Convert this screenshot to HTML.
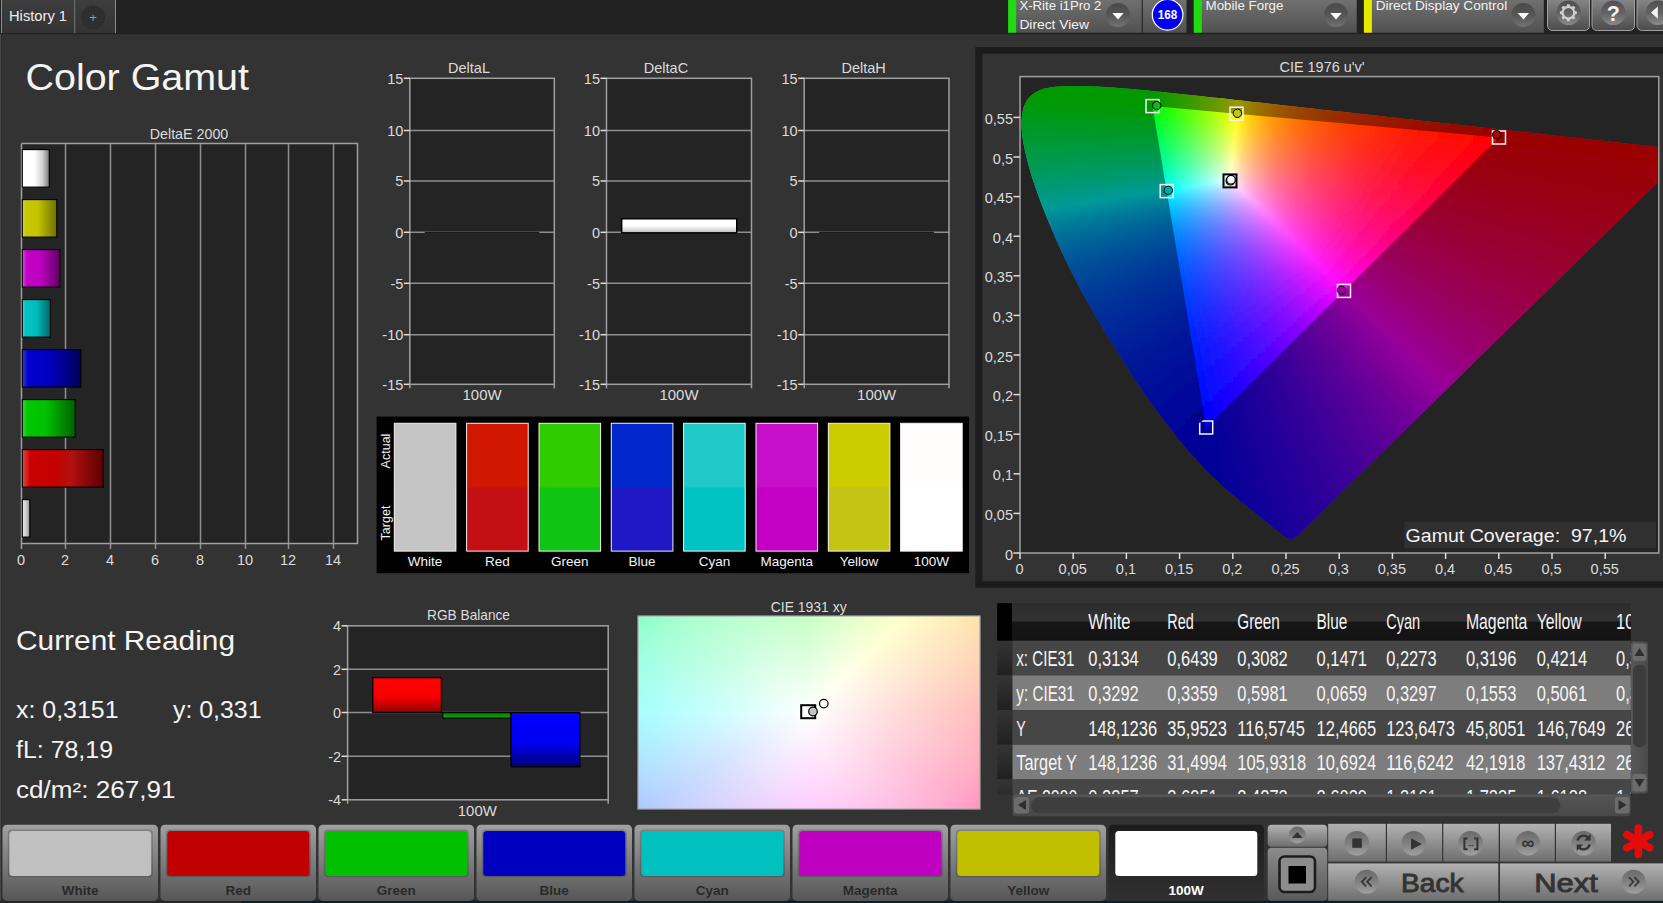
<!DOCTYPE html>
<html><head><meta charset="utf-8"><title>Color Gamut</title>
<style>html,body{margin:0;padding:0;background:#333;overflow:hidden}svg{display:block;font-family:'Liberation Sans', sans-serif}</style>
</head><body>
<svg width="1663" height="903" viewBox="0 0 1663 903">
<defs>
<linearGradient id="gtab" x1="0" y1="0" x2="0" y2="1"><stop offset="0" stop-color="#3d3d3d"/><stop offset="1" stop-color="#343434"/></linearGradient>
<linearGradient id="gpan" x1="0" y1="0" x2="0" y2="1"><stop offset="0" stop-color="#707070"/><stop offset="1" stop-color="#515151"/></linearGradient>
<linearGradient id="gbtn" x1="0" y1="0" x2="0" y2="1"><stop offset="0" stop-color="#868686"/><stop offset="1" stop-color="#4c4c4c"/></linearGradient>
<linearGradient id="gcirc" x1="0" y1="0" x2="0" y2="1"><stop offset="0" stop-color="#4a4a4a"/><stop offset="0.5" stop-color="#565656"/><stop offset="1" stop-color="#727272"/></linearGradient>
<linearGradient id="gcirc2" x1="0" y1="0" x2="0" y2="1"><stop offset="0" stop-color="#505050"/><stop offset="0.5" stop-color="#626262"/><stop offset="1" stop-color="#8a8a8a"/></linearGradient>
<linearGradient id="bw" x1="0" y1="0" x2="1" y2="0"><stop offset="0" stop-color="#fff"/><stop offset="0.45" stop-color="#fff"/><stop offset="0.75" stop-color="#d0d0d0"/><stop offset="1" stop-color="#777"/></linearGradient>
<linearGradient id="by" x1="0" y1="0" x2="1" y2="0"><stop offset="0" stop-color="#d4d432"/><stop offset="0.12" stop-color="#c8c800"/><stop offset="0.45" stop-color="#c4c400"/><stop offset="1" stop-color="#6e6e00"/></linearGradient>
<linearGradient id="bm" x1="0" y1="0" x2="1" y2="0"><stop offset="0" stop-color="#d850d8"/><stop offset="0.12" stop-color="#c400c8"/><stop offset="0.5" stop-color="#bc00c0"/><stop offset="1" stop-color="#5e0062"/></linearGradient>
<linearGradient id="bc" x1="0" y1="0" x2="1" y2="0"><stop offset="0" stop-color="#40d0d0"/><stop offset="0.12" stop-color="#00c4c4"/><stop offset="0.5" stop-color="#00bcbc"/><stop offset="1" stop-color="#006868"/></linearGradient>
<linearGradient id="bb" x1="0" y1="0" x2="1" y2="0"><stop offset="0" stop-color="#3838d8"/><stop offset="0.1" stop-color="#0000cc"/><stop offset="0.45" stop-color="#0000c4"/><stop offset="1" stop-color="#000058"/></linearGradient>
<linearGradient id="bg" x1="0" y1="0" x2="1" y2="0"><stop offset="0" stop-color="#38d838"/><stop offset="0.1" stop-color="#00c800"/><stop offset="0.45" stop-color="#00c000"/><stop offset="1" stop-color="#006000"/></linearGradient>
<linearGradient id="br" x1="0" y1="0" x2="1" y2="0"><stop offset="0" stop-color="#e04848"/><stop offset="0.1" stop-color="#cc0000"/><stop offset="0.4" stop-color="#c40000"/><stop offset="0.6" stop-color="#b41010"/><stop offset="1" stop-color="#5c0000"/></linearGradient>
<linearGradient id="bgr" x1="0" y1="0" x2="1" y2="0"><stop offset="0" stop-color="#e8e8e8"/><stop offset="0.5" stop-color="#ccc"/><stop offset="1" stop-color="#909090"/></linearGradient>
<linearGradient id="bwv" x1="0" y1="0" x2="0" y2="1"><stop offset="0" stop-color="#fff"/><stop offset="0.5" stop-color="#fff"/><stop offset="1" stop-color="#bdbdbd"/></linearGradient>
<linearGradient id="r0" gradientUnits="userSpaceOnUse" x1="1033" x2="1165" y1="0" y2="0"><stop offset="0" stop-color="#0f0"/><stop offset=".886" stop-color="#0f0"/><stop offset="1" stop-color="#2f0"/></linearGradient>
<linearGradient id="r1" gradientUnits="userSpaceOnUse" x1="1026" x2="1221" y1="0" y2="0"><stop offset="0" stop-color="#00ff02"/><stop offset=".641" stop-color="#0f0"/><stop offset=".826" stop-color="#59ff00"/><stop offset="1" stop-color="#c0ff00"/></linearGradient>
<linearGradient id="r2" gradientUnits="userSpaceOnUse" x1="1024" x2="1257" y1="0" y2="0"><stop offset="0" stop-color="#00ff0b"/><stop offset=".3" stop-color="#0f0"/><stop offset=".549" stop-color="#0f0"/><stop offset=".648" stop-color="#38ff00"/><stop offset=".747" stop-color="#78ff00"/><stop offset=".837" stop-color="#baff00"/><stop offset=".918" stop-color="#feff00"/><stop offset="1" stop-color="#ffc400"/></linearGradient>
<linearGradient id="r3" gradientUnits="userSpaceOnUse" x1="1022" x2="1284" y1="0" y2="0"><stop offset="0" stop-color="#0f1"/><stop offset=".5" stop-color="#01ff00"/><stop offset=".588" stop-color="#3aff00"/><stop offset=".672" stop-color="#7f0"/><stop offset=".748" stop-color="#b7ff00"/><stop offset=".824" stop-color="#ff0"/><stop offset=".863" stop-color="#ffdc00"/><stop offset=".905" stop-color="#ffbe00"/><stop offset="1" stop-color="#ff8c00"/></linearGradient>
<linearGradient id="r4" gradientUnits="userSpaceOnUse" x1="1021" x2="1311" y1="0" y2="0"><stop offset="0" stop-color="#00ff16"/><stop offset=".455" stop-color="#00ff03"/><stop offset=".531" stop-color="#36ff00"/><stop offset=".607" stop-color="#74ff00"/><stop offset=".676" stop-color="#b4ff00"/><stop offset=".748" stop-color="#fffe00"/><stop offset=".797" stop-color="#ffcf00"/><stop offset=".855" stop-color="#ffa600"/><stop offset=".921" stop-color="#ff8400"/><stop offset="1" stop-color="#f60"/></linearGradient>
<linearGradient id="r5" gradientUnits="userSpaceOnUse" x1="1020" x2="1338" y1="0" y2="0"><stop offset="0" stop-color="#00ff1b"/><stop offset=".421" stop-color="#01ff09"/><stop offset=".494" stop-color="#3bff05"/><stop offset=".56" stop-color="#7f0"/><stop offset=".623" stop-color="#b8ff00"/><stop offset=".682" stop-color="#feff00"/><stop offset=".742" stop-color="#ffc300"/><stop offset=".811" stop-color="#ff9300"/><stop offset=".896" stop-color="#ff6c00"/><stop offset="1" stop-color="#ff4c00"/></linearGradient>
<linearGradient id="r6" gradientUnits="userSpaceOnUse" x1="1020" x2="1356" y1="0" y2="0"><stop offset="0" stop-color="#00ff1f"/><stop offset=".399" stop-color="#00ff0f"/><stop offset=".464" stop-color="#37ff0b"/><stop offset=".53" stop-color="#77ff07"/><stop offset=".589" stop-color="#b8ff02"/><stop offset=".646" stop-color="#ff0"/><stop offset=".676" stop-color="#ffdc00"/><stop offset=".708" stop-color="#ffbd00"/><stop offset=".786" stop-color="#f80"/><stop offset=".881" stop-color="#ff5f00"/><stop offset="1" stop-color="#ff3d00"/></linearGradient>
<linearGradient id="r7" gradientUnits="userSpaceOnUse" x1="1020" x2="1374" y1="0" y2="0"><stop offset="0" stop-color="#00ff23"/><stop offset=".379" stop-color="#00ff14"/><stop offset=".438" stop-color="#34ff10"/><stop offset=".5" stop-color="#73ff0c"/><stop offset=".556" stop-color="#b5ff08"/><stop offset=".613" stop-color="#ffff03"/><stop offset=".644" stop-color="#ffd800"/><stop offset=".678" stop-color="#ffb700"/><stop offset=".718" stop-color="#f90"/><stop offset=".76" stop-color="#ff8000"/><stop offset=".864" stop-color="#ff5400"/><stop offset="1" stop-color="#ff3200"/></linearGradient>
<linearGradient id="r8" gradientUnits="userSpaceOnUse" x1="1020" x2="1391" y1="0" y2="0"><stop offset="0" stop-color="#00ff26"/><stop offset=".364" stop-color="#01ff18"/><stop offset=".423" stop-color="#39ff15"/><stop offset=".48" stop-color="#76ff11"/><stop offset=".534" stop-color="#b9ff0d"/><stop offset=".582" stop-color="#fcff09"/><stop offset=".62" stop-color="#ffd105"/><stop offset=".652" stop-color="#ffb102"/><stop offset=".693" stop-color="#ff9300"/><stop offset=".739" stop-color="#ff7800"/><stop offset=".852" stop-color="#ff4b00"/><stop offset="1" stop-color="#ff2800"/></linearGradient>
<linearGradient id="r9" gradientUnits="userSpaceOnUse" x1="1020" x2="1409" y1="0" y2="0"><stop offset="0" stop-color="#00ff2a"/><stop offset=".347" stop-color="#00ff1d"/><stop offset=".404" stop-color="#39ff1a"/><stop offset=".458" stop-color="#76ff17"/><stop offset=".509" stop-color="#b9ff13"/><stop offset=".555" stop-color="#fdff0f"/><stop offset=".591" stop-color="#ffd00a"/><stop offset=".627" stop-color="#ffac06"/><stop offset=".668" stop-color="#ff8d02"/><stop offset=".717" stop-color="#ff7000"/><stop offset=".774" stop-color="#ff5800"/><stop offset=".838" stop-color="#ff4300"/><stop offset="1" stop-color="#ff2000"/></linearGradient>
<linearGradient id="r10" gradientUnits="userSpaceOnUse" x1="1020" x2="1427" y1="0" y2="0"><stop offset="0" stop-color="#00ff2e"/><stop offset=".332" stop-color="#0f2"/><stop offset=".381" stop-color="#33ff1f"/><stop offset=".435" stop-color="#73ff1c"/><stop offset=".484" stop-color="#b6ff19"/><stop offset=".531" stop-color="#feff15"/><stop offset=".565" stop-color="#ffcf0f"/><stop offset=".602" stop-color="#ffa90a"/><stop offset=".646" stop-color="#ff8705"/><stop offset=".698" stop-color="#ff6902"/><stop offset=".757" stop-color="#ff5000"/><stop offset=".826" stop-color="#ff3b00"/><stop offset="1" stop-color="#ff1800"/></linearGradient>
<linearGradient id="r11" gradientUnits="userSpaceOnUse" x1="1020" x2="1445" y1="0" y2="0"><stop offset="0" stop-color="#00ff31"/><stop offset=".32" stop-color="#01ff27"/><stop offset=".372" stop-color="#3aff24"/><stop offset=".421" stop-color="#79ff22"/><stop offset=".466" stop-color="#b9ff1f"/><stop offset=".508" stop-color="#ffff1c"/><stop offset=".541" stop-color="#ffcf14"/><stop offset=".579" stop-color="#ffa60e"/><stop offset=".624" stop-color="#ff8309"/><stop offset=".678" stop-color="#ff6404"/><stop offset=".741" stop-color="#ff4a00"/><stop offset=".814" stop-color="#ff3400"/><stop offset="1" stop-color="#ff1200"/></linearGradient>
<linearGradient id="r12" gradientUnits="userSpaceOnUse" x1="1020" x2="1463" y1="0" y2="0"><stop offset="0" stop-color="#00ff35"/><stop offset=".307" stop-color="#00ff2c"/><stop offset=".354" stop-color="#37ff2a"/><stop offset=".402" stop-color="#76ff27"/><stop offset=".445" stop-color="#b6ff25"/><stop offset=".488" stop-color="#ff2"/><stop offset=".521" stop-color="#ffcb19"/><stop offset=".56" stop-color="#ffa112"/><stop offset=".607" stop-color="#ff7c0c"/><stop offset=".661" stop-color="#ff5e06"/><stop offset=".727" stop-color="#ff4302"/><stop offset=".804" stop-color="#ff2e00"/><stop offset="1" stop-color="#ff0c00"/></linearGradient>
<linearGradient id="r13" gradientUnits="userSpaceOnUse" x1="1020" x2="1481" y1="0" y2="0"><stop offset="0" stop-color="#00ff39"/><stop offset=".295" stop-color="#00ff31"/><stop offset=".338" stop-color="#34ff2f"/><stop offset=".384" stop-color="#72ff2d"/><stop offset=".425" stop-color="#b3ff2b"/><stop offset=".469" stop-color="#fffe28"/><stop offset=".501" stop-color="#ffca1e"/><stop offset=".54" stop-color="#ff9e16"/><stop offset=".588" stop-color="#ff780f"/><stop offset=".644" stop-color="#ff5909"/><stop offset=".711" stop-color="#ff3e04"/><stop offset=".792" stop-color="#ff2800"/><stop offset="1" stop-color="#ff0700"/></linearGradient>
<linearGradient id="r14" gradientUnits="userSpaceOnUse" x1="1020" x2="1499" y1="0" y2="0"><stop offset="0" stop-color="#00ff3c"/><stop offset=".286" stop-color="#01ff36"/><stop offset=".33" stop-color="#39ff34"/><stop offset=".372" stop-color="#75ff33"/><stop offset=".409" stop-color="#b3ff31"/><stop offset=".451" stop-color="#fffd2f"/><stop offset=".484" stop-color="#ffc623"/><stop offset=".524" stop-color="#ff991a"/><stop offset=".572" stop-color="#ff7312"/><stop offset=".628" stop-color="#ff540b"/><stop offset=".697" stop-color="#ff3a05"/><stop offset=".781" stop-color="#ff2401"/><stop offset=".881" stop-color="#f10"/><stop offset="1" stop-color="#ff0200"/></linearGradient>
<linearGradient id="r15" gradientUnits="userSpaceOnUse" x1="1020" x2="1517" y1="0" y2="0"><stop offset="0" stop-color="#00ff40"/><stop offset=".276" stop-color="#00ff3b"/><stop offset=".316" stop-color="#35ff3a"/><stop offset=".356" stop-color="#72ff39"/><stop offset=".39" stop-color="#acff37"/><stop offset=".435" stop-color="#fffc35"/><stop offset=".469" stop-color="#ffc328"/><stop offset=".509" stop-color="#ff941d"/><stop offset=".557" stop-color="#ff6e14"/><stop offset=".616" stop-color="#ff4f0d"/><stop offset=".69" stop-color="#ff3307"/><stop offset=".779" stop-color="#ff1d02"/><stop offset=".901" stop-color="#ff0900"/><stop offset="1" stop-color="#f00"/></linearGradient>
<linearGradient id="r16" gradientUnits="userSpaceOnUse" x1="1020" x2="1535" y1="0" y2="0"><stop offset="0" stop-color="#0f4"/><stop offset=".266" stop-color="#00ff40"/><stop offset=".301" stop-color="#2fff3f"/><stop offset=".342" stop-color="#6eff3f"/><stop offset=".375" stop-color="#a8ff3e"/><stop offset=".417" stop-color="#feff3c"/><stop offset=".419" stop-color="#fffb3c"/><stop offset=".437" stop-color="#ffda33"/><stop offset=".454" stop-color="#ffbf2c"/><stop offset=".495" stop-color="#ff9020"/><stop offset=".546" stop-color="#ff6817"/><stop offset=".606" stop-color="#ff490f"/><stop offset=".685" stop-color="#ff2d08"/><stop offset=".784" stop-color="#ff1602"/><stop offset=".94" stop-color="#f00"/><stop offset="1" stop-color="#f00"/></linearGradient>
<linearGradient id="r17" gradientUnits="userSpaceOnUse" x1="1020" x2="1553" y1="0" y2="0"><stop offset="0" stop-color="#00ff48"/><stop offset=".259" stop-color="#01ff45"/><stop offset=".298" stop-color="#3aff45"/><stop offset=".336" stop-color="#78ff44"/><stop offset=".37" stop-color="#b7ff44"/><stop offset=".403" stop-color="#ffff43"/><stop offset=".42" stop-color="#ffdd3a"/><stop offset=".437" stop-color="#ffc132"/><stop offset=".478" stop-color="#ff8f25"/><stop offset=".529" stop-color="#ff661a"/><stop offset=".593" stop-color="#ff4511"/><stop offset=".679" stop-color="#ff2809"/><stop offset=".79" stop-color="#ff1002"/><stop offset=".904" stop-color="#f00"/><stop offset="1" stop-color="#f00"/></linearGradient>
<linearGradient id="r18" gradientUnits="userSpaceOnUse" x1="1020" x2="1571" y1="0" y2="0"><stop offset="0" stop-color="#00ff4b"/><stop offset=".25" stop-color="#00ff4b"/><stop offset=".287" stop-color="#36ff4b"/><stop offset=".323" stop-color="#75ff4a"/><stop offset=".356" stop-color="#b4ff4a"/><stop offset=".39" stop-color="#fffe4a"/><stop offset=".407" stop-color="#ffdc40"/><stop offset=".425" stop-color="#ffbd37"/><stop offset=".466" stop-color="#ff8a28"/><stop offset=".519" stop-color="#ff611c"/><stop offset=".583" stop-color="#ff4012"/><stop offset=".677" stop-color="#ff2209"/><stop offset=".797" stop-color="#ff0a02"/><stop offset=".871" stop-color="#f00"/><stop offset="1" stop-color="#f00"/></linearGradient>
<linearGradient id="r19" gradientUnits="userSpaceOnUse" x1="1020" x2="1589" y1="0" y2="0"><stop offset="0" stop-color="#00ff4f"/><stop offset=".243" stop-color="#00ff50"/><stop offset=".274" stop-color="#30ff50"/><stop offset=".311" stop-color="#71ff51"/><stop offset=".343" stop-color="#b0ff51"/><stop offset=".378" stop-color="#fffd51"/><stop offset=".394" stop-color="#ffdb46"/><stop offset=".411" stop-color="#ffbc3c"/><stop offset=".453" stop-color="#ff882c"/><stop offset=".506" stop-color="#ff5e1e"/><stop offset=".571" stop-color="#ff3c14"/><stop offset=".671" stop-color="#ff1d0a"/><stop offset=".801" stop-color="#ff0503"/><stop offset=".842" stop-color="#ff0001"/><stop offset="1" stop-color="#f00"/></linearGradient>
<linearGradient id="r20" gradientUnits="userSpaceOnUse" x1="1020" x2="1607" y1="0" y2="0"><stop offset="0" stop-color="#00ff53"/><stop offset=".237" stop-color="#01ff56"/><stop offset=".271" stop-color="#38ff56"/><stop offset=".303" stop-color="#74ff57"/><stop offset=".33" stop-color="#adff57"/><stop offset=".366" stop-color="#fffc57"/><stop offset=".382" stop-color="#ffda4c"/><stop offset=".4" stop-color="#ffb941"/><stop offset=".421" stop-color="#ff9c37"/><stop offset=".443" stop-color="#ff832f"/><stop offset=".496" stop-color="#ff5a21"/><stop offset=".562" stop-color="#ff3815"/><stop offset=".668" stop-color="#ff190b"/><stop offset=".809" stop-color="#ff0003"/><stop offset="1" stop-color="#f00"/></linearGradient>
<linearGradient id="r21" gradientUnits="userSpaceOnUse" x1="1021" x2="1625" y1="0" y2="0"><stop offset="0" stop-color="#00ff57"/><stop offset=".228" stop-color="#00ff5b"/><stop offset=".26" stop-color="#35ff5c"/><stop offset=".291" stop-color="#71ff5d"/><stop offset=".323" stop-color="#b5ff5e"/><stop offset=".353" stop-color="#feff5f"/><stop offset=".354" stop-color="#fffb5e"/><stop offset=".369" stop-color="#ffd952"/><stop offset=".387" stop-color="#ffb846"/><stop offset=".407" stop-color="#ff9b3c"/><stop offset=".43" stop-color="#ff8132"/><stop offset=".485" stop-color="#ff5623"/><stop offset=".553" stop-color="#ff3417"/><stop offset=".652" stop-color="#ff170c"/><stop offset=".783" stop-color="#ff0004"/><stop offset="1" stop-color="#f00"/></linearGradient>
<linearGradient id="r22" gradientUnits="userSpaceOnUse" x1="1021" x2="1642" y1="0" y2="0"><stop offset="0" stop-color="#00ff5b"/><stop offset=".222" stop-color="#00ff61"/><stop offset=".251" stop-color="#31ff62"/><stop offset=".285" stop-color="#74ff64"/><stop offset=".316" stop-color="#b9ff65"/><stop offset=".343" stop-color="#ffff67"/><stop offset=".359" stop-color="#ffd858"/><stop offset=".377" stop-color="#ffb74b"/><stop offset=".396" stop-color="#ff9a40"/><stop offset=".419" stop-color="#ff8036"/><stop offset=".472" stop-color="#ff5526"/><stop offset=".541" stop-color="#ff3219"/><stop offset=".636" stop-color="#ff160e"/><stop offset=".758" stop-color="#ff0006"/><stop offset="1" stop-color="#f00"/></linearGradient>
<linearGradient id="r23" gradientUnits="userSpaceOnUse" x1="1021" x2="1658" y1="0" y2="0"><stop offset="0" stop-color="#00ff5f"/><stop offset=".218" stop-color="#01ff67"/><stop offset=".25" stop-color="#3aff68"/><stop offset=".279" stop-color="#77ff6a"/><stop offset=".306" stop-color="#b5ff6c"/><stop offset=".334" stop-color="#fffe6e"/><stop offset=".35" stop-color="#ffd75e"/><stop offset=".367" stop-color="#ffb651"/><stop offset=".388" stop-color="#ff9744"/><stop offset=".41" stop-color="#ff7d3a"/><stop offset=".465" stop-color="#ff5128"/><stop offset=".534" stop-color="#ff2f1a"/><stop offset=".623" stop-color="#ff1510"/><stop offset=".736" stop-color="#ff0007"/><stop offset="1" stop-color="#f00"/></linearGradient>
<linearGradient id="r24" gradientUnits="userSpaceOnUse" x1="1022" x2="1658" y1="0" y2="0"><stop offset="0" stop-color="#00ff63"/><stop offset=".217" stop-color="#00ff6c"/><stop offset=".247" stop-color="#36ff6e"/><stop offset=".277" stop-color="#73ff71"/><stop offset=".303" stop-color="#b1ff73"/><stop offset=".333" stop-color="#fffd75"/><stop offset=".349" stop-color="#ffd664"/><stop offset=".366" stop-color="#ffb556"/><stop offset=".387" stop-color="#ff9649"/><stop offset=".409" stop-color="#ff7d3e"/><stop offset=".464" stop-color="#ff502b"/><stop offset=".533" stop-color="#ff2f1d"/><stop offset=".621" stop-color="#ff1412"/><stop offset=".733" stop-color="#ff0009"/><stop offset="1" stop-color="#f00"/></linearGradient>
<linearGradient id="r25" gradientUnits="userSpaceOnUse" x1="1022" x2="1658" y1="0" y2="0"><stop offset="0" stop-color="#00ff67"/><stop offset=".217" stop-color="#00ff72"/><stop offset=".244" stop-color="#2fff74"/><stop offset=".275" stop-color="#70ff77"/><stop offset=".302" stop-color="#aeff7a"/><stop offset=".333" stop-color="#fffc7c"/><stop offset=".349" stop-color="#ffd56b"/><stop offset=".366" stop-color="#ffb45c"/><stop offset=".387" stop-color="#ff954e"/><stop offset=".409" stop-color="#ff7c42"/><stop offset=".464" stop-color="#ff502f"/><stop offset=".533" stop-color="#ff2e1f"/><stop offset=".619" stop-color="#ff1414"/><stop offset=".73" stop-color="#ff000b"/><stop offset="1" stop-color="#f00"/></linearGradient>
<linearGradient id="r26" gradientUnits="userSpaceOnUse" x1="1022" x2="1658" y1="0" y2="0"><stop offset="0" stop-color="#00ff6b"/><stop offset=".219" stop-color="#01ff78"/><stop offset=".248" stop-color="#38ff7b"/><stop offset=".277" stop-color="#73ff7e"/><stop offset=".305" stop-color="#b6ff81"/><stop offset=".332" stop-color="#feff85"/><stop offset=".333" stop-color="#fffc83"/><stop offset=".349" stop-color="#ffd471"/><stop offset=".366" stop-color="#ffb361"/><stop offset=".387" stop-color="#ff9453"/><stop offset=".409" stop-color="#ff7b47"/><stop offset=".464" stop-color="#ff4f32"/><stop offset=".533" stop-color="#ff2d22"/><stop offset=".618" stop-color="#ff1416"/><stop offset=".726" stop-color="#ff000d"/><stop offset="1" stop-color="#f00"/></linearGradient>
<linearGradient id="r27" gradientUnits="userSpaceOnUse" x1="1023" x2="1658" y1="0" y2="0"><stop offset="0" stop-color="#00ff70"/><stop offset=".217" stop-color="#00ff7e"/><stop offset=".247" stop-color="#37ff82"/><stop offset=".277" stop-color="#76ff85"/><stop offset=".306" stop-color="#baff89"/><stop offset=".331" stop-color="#ffff8d"/><stop offset=".346" stop-color="#ffd779"/><stop offset=".364" stop-color="#ffb568"/><stop offset=".384" stop-color="#ff9658"/><stop offset=".406" stop-color="#ff7c4c"/><stop offset=".461" stop-color="#ff4f35"/><stop offset=".531" stop-color="#ff2d25"/><stop offset=".616" stop-color="#ff1418"/><stop offset=".723" stop-color="#ff000e"/><stop offset="1" stop-color="#ff0001"/></linearGradient>
<linearGradient id="r28" gradientUnits="userSpaceOnUse" x1="1023" x2="1658" y1="0" y2="0"><stop offset="0" stop-color="#00ff74"/><stop offset=".217" stop-color="#00ff85"/><stop offset=".244" stop-color="#30ff88"/><stop offset=".276" stop-color="#72ff8c"/><stop offset=".302" stop-color="#b2ff90"/><stop offset=".331" stop-color="#fffe94"/><stop offset=".346" stop-color="#ffd67f"/><stop offset=".364" stop-color="#ffb46e"/><stop offset=".383" stop-color="#ff975f"/><stop offset=".405" stop-color="#ff7c51"/><stop offset=".458" stop-color="#ff503a"/><stop offset=".529" stop-color="#ff2d28"/><stop offset=".613" stop-color="#ff141a"/><stop offset=".72" stop-color="#ff0010"/><stop offset="1" stop-color="#ff0002"/></linearGradient>
<linearGradient id="r29" gradientUnits="userSpaceOnUse" x1="1024" x2="1658" y1="0" y2="0"><stop offset="0" stop-color="#00ff78"/><stop offset=".218" stop-color="#01ff8b"/><stop offset=".248" stop-color="#39ff8f"/><stop offset=".276" stop-color="#76ff93"/><stop offset=".301" stop-color="#b3ff97"/><stop offset=".33" stop-color="#fffd9c"/><stop offset=".345" stop-color="#ffd586"/><stop offset=".363" stop-color="#ffb373"/><stop offset=".382" stop-color="#ff9664"/><stop offset=".404" stop-color="#ff7b55"/><stop offset=".457" stop-color="#ff4f3d"/><stop offset=".528" stop-color="#ff2c2a"/><stop offset=".612" stop-color="#ff131c"/><stop offset=".716" stop-color="#ff0012"/><stop offset="1" stop-color="#ff0003"/></linearGradient>
<linearGradient id="r30" gradientUnits="userSpaceOnUse" x1="1024" x2="1658" y1="0" y2="0"><stop offset="0" stop-color="#00ff7c"/><stop offset=".218" stop-color="#00ff91"/><stop offset=".246" stop-color="#35ff95"/><stop offset=".274" stop-color="#72ff9a"/><stop offset=".3" stop-color="#afff9f"/><stop offset=".33" stop-color="#fffca4"/><stop offset=".345" stop-color="#ffd48d"/><stop offset=".363" stop-color="#ffb279"/><stop offset=".382" stop-color="#ff9569"/><stop offset=".404" stop-color="#ff7a59"/><stop offset=".457" stop-color="#ff4f40"/><stop offset=".528" stop-color="#ff2c2d"/><stop offset=".61" stop-color="#ff131f"/><stop offset=".713" stop-color="#ff0014"/><stop offset="1" stop-color="#ff0004"/></linearGradient>
<linearGradient id="r31" gradientUnits="userSpaceOnUse" x1="1025" x2="1658" y1="0" y2="0"><stop offset="0" stop-color="#00ff81"/><stop offset=".216" stop-color="#00ff98"/><stop offset=".242" stop-color="#2eff9c"/><stop offset=".272" stop-color="#6effa1"/><stop offset=".297" stop-color="#abffa6"/><stop offset=".327" stop-color="#feffad"/><stop offset=".329" stop-color="#fffcab"/><stop offset=".344" stop-color="#ffd393"/><stop offset=".362" stop-color="#ffb17f"/><stop offset=".381" stop-color="#ff946e"/><stop offset=".403" stop-color="#ff7a5e"/><stop offset=".457" stop-color="#ff4e44"/><stop offset=".528" stop-color="#ff2b2f"/><stop offset=".608" stop-color="#ff1321"/><stop offset=".709" stop-color="#ff0016"/><stop offset="1" stop-color="#ff0005"/></linearGradient>
<linearGradient id="r32" gradientUnits="userSpaceOnUse" x1="1025" x2="1658" y1="0" y2="0"><stop offset="0" stop-color="#00ff85"/><stop offset=".218" stop-color="#01ff9e"/><stop offset=".248" stop-color="#3bffa4"/><stop offset=".276" stop-color="#79ffa9"/><stop offset=".302" stop-color="#b8ffaf"/><stop offset=".327" stop-color="#ffffb6"/><stop offset=".343" stop-color="#ffd69c"/><stop offset=".36" stop-color="#ffb386"/><stop offset=".379" stop-color="#ff9574"/><stop offset=".401" stop-color="#ff7a63"/><stop offset=".455" stop-color="#ff4e48"/><stop offset=".526" stop-color="#ff2b32"/><stop offset=".605" stop-color="#ff1323"/><stop offset=".706" stop-color="#ff0017"/><stop offset="1" stop-color="#ff0006"/></linearGradient>
<linearGradient id="r33" gradientUnits="userSpaceOnUse" x1="1026" x2="1658" y1="0" y2="0"><stop offset="0" stop-color="#00ff8a"/><stop offset=".217" stop-color="#00ffa5"/><stop offset=".245" stop-color="#37ffaa"/><stop offset=".274" stop-color="#75ffb1"/><stop offset=".299" stop-color="#b4ffb7"/><stop offset=".326" stop-color="#fffebe"/><stop offset=".34" stop-color="#ffd8a5"/><stop offset=".358" stop-color="#ffb58e"/><stop offset=".378" stop-color="#ff9479"/><stop offset=".4" stop-color="#ff7968"/><stop offset=".454" stop-color="#ff4d4b"/><stop offset=".525" stop-color="#ff2a35"/><stop offset=".604" stop-color="#ff1325"/><stop offset=".703" stop-color="#ff0019"/><stop offset="1" stop-color="#ff0007"/></linearGradient>
<linearGradient id="r34" gradientUnits="userSpaceOnUse" x1="1027" x2="1658" y1="0" y2="0"><stop offset="0" stop-color="#00ff8e"/><stop offset=".216" stop-color="#00ffac"/><stop offset=".241" stop-color="#30ffb1"/><stop offset=".271" stop-color="#71ffb8"/><stop offset=".296" stop-color="#b0ffbf"/><stop offset=".325" stop-color="#fffdc6"/><stop offset=".339" stop-color="#ffd7ac"/><stop offset=".357" stop-color="#ffb494"/><stop offset=".377" stop-color="#ff937e"/><stop offset=".399" stop-color="#ff786c"/><stop offset=".453" stop-color="#ff4c4f"/><stop offset=".525" stop-color="#ff2a37"/><stop offset=".602" stop-color="#ff1228"/><stop offset=".699" stop-color="#ff001b"/><stop offset="1" stop-color="#ff0008"/></linearGradient>
<linearGradient id="r35" gradientUnits="userSpaceOnUse" x1="1027" x2="1658" y1="0" y2="0"><stop offset="0" stop-color="#00ff93"/><stop offset=".217" stop-color="#01ffb3"/><stop offset=".246" stop-color="#39ffb9"/><stop offset=".273" stop-color="#74ffc0"/><stop offset=".296" stop-color="#b0ffc7"/><stop offset=".325" stop-color="#fffdce"/><stop offset=".339" stop-color="#ffd6b4"/><stop offset=".357" stop-color="#ffb39a"/><stop offset=".377" stop-color="#ff9284"/><stop offset=".399" stop-color="#ff7771"/><stop offset=".453" stop-color="#ff4b52"/><stop offset=".525" stop-color="#ff293a"/><stop offset=".601" stop-color="#ff122a"/><stop offset=".696" stop-color="#ff001d"/><stop offset="1" stop-color="#ff0009"/></linearGradient>
<linearGradient id="r36" gradientUnits="userSpaceOnUse" x1="1028" x2="1658" y1="0" y2="0"><stop offset="0" stop-color="#00ff98"/><stop offset=".117" stop-color="#00ffa7"/><stop offset=".216" stop-color="#00ffb9"/><stop offset=".243" stop-color="#35ffc0"/><stop offset=".27" stop-color="#71ffc7"/><stop offset=".297" stop-color="#b5ffd0"/><stop offset=".322" stop-color="#feffd9"/><stop offset=".324" stop-color="#fffcd6"/><stop offset=".338" stop-color="#ffd5bb"/><stop offset=".356" stop-color="#ffb2a1"/><stop offset=".376" stop-color="#ff9189"/><stop offset=".398" stop-color="#ff7776"/><stop offset=".452" stop-color="#ff4b56"/><stop offset=".522" stop-color="#ff293d"/><stop offset=".598" stop-color="#ff122c"/><stop offset=".692" stop-color="#ff001f"/><stop offset="1" stop-color="#ff000a"/></linearGradient>
<linearGradient id="r37" gradientUnits="userSpaceOnUse" x1="1028" x2="1658" y1="0" y2="0"><stop offset="0" stop-color="#00ff9c"/><stop offset=".117" stop-color="#00ffad"/><stop offset=".216" stop-color="#00ffc0"/><stop offset=".24" stop-color="#2dffc7"/><stop offset=".268" stop-color="#6cffcf"/><stop offset=".297" stop-color="#b5ffd8"/><stop offset=".322" stop-color="#ffffe2"/><stop offset=".324" stop-color="#fffbdf"/><stop offset=".338" stop-color="#ffd4c2"/><stop offset=".356" stop-color="#ffb1a7"/><stop offset=".375" stop-color="#ff9290"/><stop offset=".397" stop-color="#ff777b"/><stop offset=".451" stop-color="#ff4b5a"/><stop offset=".522" stop-color="#ff2840"/><stop offset=".597" stop-color="#ff122f"/><stop offset=".689" stop-color="#ff0021"/><stop offset="1" stop-color="#ff000b"/></linearGradient>
<linearGradient id="r38" gradientUnits="userSpaceOnUse" x1="1029" x2="1658" y1="0" y2="0"><stop offset="0" stop-color="#00ffa1"/><stop offset=".118" stop-color="#00ffb3"/><stop offset=".216" stop-color="#01ffc8"/><stop offset=".245" stop-color="#3affd0"/><stop offset=".272" stop-color="#78ffd8"/><stop offset=".297" stop-color="#b9ffe2"/><stop offset=".321" stop-color="#ffffeb"/><stop offset=".335" stop-color="#ffd7cc"/><stop offset=".353" stop-color="#ffb2af"/><stop offset=".372" stop-color="#ff9497"/><stop offset=".394" stop-color="#ff7881"/><stop offset=".448" stop-color="#ff4b5e"/><stop offset=".52" stop-color="#ff2843"/><stop offset=".593" stop-color="#ff1232"/><stop offset=".685" stop-color="#ff0023"/><stop offset="1" stop-color="#ff000c"/></linearGradient>
<linearGradient id="r39" gradientUnits="userSpaceOnUse" x1="1030" x2="1658" y1="0" y2="0"><stop offset="0" stop-color="#00ffa6"/><stop offset=".118" stop-color="#00ffb9"/><stop offset=".215" stop-color="#00ffcf"/><stop offset=".242" stop-color="#36ffd7"/><stop offset=".269" stop-color="#74ffe0"/><stop offset=".293" stop-color="#b1ffe9"/><stop offset=".32" stop-color="#fffef4"/><stop offset=".334" stop-color="#ffd6d4"/><stop offset=".352" stop-color="#ffb1b6"/><stop offset=".371" stop-color="#ff939d"/><stop offset=".393" stop-color="#ff7786"/><stop offset=".447" stop-color="#ff4a62"/><stop offset=".519" stop-color="#ff2745"/><stop offset=".592" stop-color="#ff1134"/><stop offset=".682" stop-color="#ff0026"/><stop offset=".82" stop-color="#ff0018"/><stop offset="1" stop-color="#ff000d"/></linearGradient>
<linearGradient id="r40" gradientUnits="userSpaceOnUse" x1="1030" x2="1658" y1="0" y2="0"><stop offset="0" stop-color="#00ffab"/><stop offset=".118" stop-color="#00ffbf"/><stop offset=".215" stop-color="#00ffd6"/><stop offset=".239" stop-color="#2fffde"/><stop offset=".268" stop-color="#6fffe8"/><stop offset=".291" stop-color="#adfff1"/><stop offset=".32" stop-color="#fffdfc"/><stop offset=".334" stop-color="#ffd5db"/><stop offset=".352" stop-color="#ffb0bc"/><stop offset=".371" stop-color="#ff92a2"/><stop offset=".393" stop-color="#ff768b"/><stop offset=".447" stop-color="#ff4965"/><stop offset=".519" stop-color="#ff2748"/><stop offset=".591" stop-color="#ff1136"/><stop offset=".678" stop-color="#ff0028"/><stop offset=".818" stop-color="#ff0019"/><stop offset="1" stop-color="#ff000e"/></linearGradient>
<linearGradient id="r41" gradientUnits="userSpaceOnUse" x1="1031" x2="1658" y1="0" y2="0"><stop offset="0" stop-color="#00ffb0"/><stop offset=".118" stop-color="#00ffc5"/><stop offset=".215" stop-color="#01ffde"/><stop offset=".262" stop-color="#64ffee"/><stop offset=".3" stop-color="#c8ffff"/><stop offset=".322" stop-color="#fff2fd"/><stop offset=".337" stop-color="#ffcddc"/><stop offset=".354" stop-color="#ffaabe"/><stop offset=".375" stop-color="#ff8aa2"/><stop offset=".397" stop-color="#ff708b"/><stop offset=".451" stop-color="#ff4566"/><stop offset=".523" stop-color="#ff2449"/><stop offset=".592" stop-color="#ff1038"/><stop offset=".675" stop-color="#ff002a"/><stop offset=".815" stop-color="#ff001b"/><stop offset="1" stop-color="#ff000f"/></linearGradient>
<linearGradient id="r42" gradientUnits="userSpaceOnUse" x1="1031" x2="1658" y1="0" y2="0"><stop offset="0" stop-color="#00ffb5"/><stop offset=".118" stop-color="#00ffcb"/><stop offset=".215" stop-color="#00ffe6"/><stop offset=".249" stop-color="#46fff2"/><stop offset=".281" stop-color="#93ffff"/><stop offset=".325" stop-color="#ffe8fd"/><stop offset=".34" stop-color="#ffc4dd"/><stop offset=".357" stop-color="#ffa3bf"/><stop offset=".378" stop-color="#ff85a4"/><stop offset=".4" stop-color="#ff6c8d"/><stop offset=".456" stop-color="#ff4267"/><stop offset=".528" stop-color="#ff224b"/><stop offset=".593" stop-color="#ff0f3a"/><stop offset=".671" stop-color="#ff002c"/><stop offset=".813" stop-color="#ff001c"/><stop offset="1" stop-color="#ff0010"/></linearGradient>
<linearGradient id="r43" gradientUnits="userSpaceOnUse" x1="1032" x2="1657" y1="0" y2="0"><stop offset="0" stop-color="#00ffba"/><stop offset=".117" stop-color="#00ffd1"/><stop offset=".214" stop-color="#00ffed"/><stop offset=".234" stop-color="#25fff4"/><stop offset=".259" stop-color="#5fffff"/><stop offset=".328" stop-color="#ffdefd"/><stop offset=".344" stop-color="#ffb9db"/><stop offset=".362" stop-color="#ff9abe"/><stop offset=".382" stop-color="#ff7ea4"/><stop offset=".405" stop-color="#ff668e"/><stop offset=".461" stop-color="#ff3e68"/><stop offset=".533" stop-color="#ff1f4c"/><stop offset=".669" stop-color="#ff002e"/><stop offset=".811" stop-color="#ff001e"/><stop offset="1" stop-color="#f01"/></linearGradient>
<linearGradient id="r44" gradientUnits="userSpaceOnUse" x1="1033" x2="1655" y1="0" y2="0"><stop offset="0" stop-color="#00ffbf"/><stop offset=".119" stop-color="#00ffd8"/><stop offset=".215" stop-color="#01fff6"/><stop offset=".24" stop-color="#32ffff"/><stop offset=".331" stop-color="#ffd5fe"/><stop offset=".347" stop-color="#ffb2dc"/><stop offset=".365" stop-color="#ff94bf"/><stop offset=".386" stop-color="#ff79a5"/><stop offset=".408" stop-color="#ff628f"/><stop offset=".465" stop-color="#ff3c6a"/><stop offset=".539" stop-color="#ff1d4d"/><stop offset=".667" stop-color="#ff0031"/><stop offset=".81" stop-color="#ff0020"/><stop offset="1" stop-color="#ff0013"/></linearGradient>
<linearGradient id="r45" gradientUnits="userSpaceOnUse" x1="1034" x2="1653" y1="0" y2="0"><stop offset="0" stop-color="#00ffc4"/><stop offset=".118" stop-color="#00ffde"/><stop offset=".215" stop-color="#00fffd"/><stop offset=".271" stop-color="#74e9ff"/><stop offset=".334" stop-color="#ffccfe"/><stop offset=".351" stop-color="#ffabdd"/><stop offset=".368" stop-color="#ff8fc1"/><stop offset=".389" stop-color="#ff75a7"/><stop offset=".414" stop-color="#ff5d90"/><stop offset=".47" stop-color="#ff386b"/><stop offset=".544" stop-color="#ff1b4e"/><stop offset=".666" stop-color="#f03"/><stop offset=".809" stop-color="#ff0021"/><stop offset="1" stop-color="#ff0014"/></linearGradient>
<linearGradient id="r46" gradientUnits="userSpaceOnUse" x1="1034" x2="1651" y1="0" y2="0"><stop offset="0" stop-color="#00ffca"/><stop offset=".109" stop-color="#00ffe2"/><stop offset=".199" stop-color="#0ff"/><stop offset=".216" stop-color="#00f9ff"/><stop offset=".272" stop-color="#70e2ff"/><stop offset=".339" stop-color="#ffc4fe"/><stop offset=".355" stop-color="#ffa4de"/><stop offset=".373" stop-color="#ff89c2"/><stop offset=".394" stop-color="#ff70a8"/><stop offset=".418" stop-color="#ff5a91"/><stop offset=".475" stop-color="#ff366d"/><stop offset=".549" stop-color="#ff194f"/><stop offset=".665" stop-color="#ff0035"/><stop offset=".809" stop-color="#ff0023"/><stop offset="1" stop-color="#ff0015"/></linearGradient>
<linearGradient id="r47" gradientUnits="userSpaceOnUse" x1="1035" x2="1649" y1="0" y2="0"><stop offset="0" stop-color="#00ffcf"/><stop offset=".096" stop-color="#00ffe5"/><stop offset=".178" stop-color="#0ff"/><stop offset=".217" stop-color="#01f1ff"/><stop offset=".279" stop-color="#79d8ff"/><stop offset=".342" stop-color="#ffbcfe"/><stop offset=".358" stop-color="#ff9edf"/><stop offset=".378" stop-color="#ff82c1"/><stop offset=".423" stop-color="#ff5592"/><stop offset=".482" stop-color="#ff326d"/><stop offset=".555" stop-color="#ff1750"/><stop offset=".663" stop-color="#ff0038"/><stop offset=".808" stop-color="#ff0025"/><stop offset="1" stop-color="#ff0016"/></linearGradient>
<linearGradient id="r48" gradientUnits="userSpaceOnUse" x1="1036" x2="1647" y1="0" y2="0"><stop offset="0" stop-color="#00ffd5"/><stop offset=".157" stop-color="#0ff"/><stop offset=".216" stop-color="#00e9ff"/><stop offset=".28" stop-color="#78d0ff"/><stop offset=".345" stop-color="#ffb4ff"/><stop offset=".362" stop-color="#ff97e0"/><stop offset=".381" stop-color="#ff7dc2"/><stop offset=".427" stop-color="#ff5293"/><stop offset=".486" stop-color="#ff306e"/><stop offset=".561" stop-color="#ff1551"/><stop offset=".661" stop-color="#ff003a"/><stop offset=".807" stop-color="#ff0026"/><stop offset="1" stop-color="#ff0017"/></linearGradient>
<linearGradient id="r49" gradientUnits="userSpaceOnUse" x1="1036" x2="1645" y1="0" y2="0"><stop offset="0" stop-color="#00ffda"/><stop offset=".138" stop-color="#0ff"/><stop offset=".217" stop-color="#00e3ff"/><stop offset=".281" stop-color="#75caff"/><stop offset=".35" stop-color="#ffacff"/><stop offset=".365" stop-color="#ff94e3"/><stop offset=".383" stop-color="#ff7cc8"/><stop offset=".424" stop-color="#ff549c"/><stop offset=".475" stop-color="#ff3578"/><stop offset=".539" stop-color="#ff1c5c"/><stop offset=".66" stop-color="#ff003d"/><stop offset=".806" stop-color="#ff0028"/><stop offset="1" stop-color="#ff0019"/></linearGradient>
<linearGradient id="r50" gradientUnits="userSpaceOnUse" x1="1037" x2="1643" y1="0" y2="0"><stop offset="0" stop-color="#00ffe0"/><stop offset=".116" stop-color="#0ff"/><stop offset=".218" stop-color="#01dcff"/><stop offset=".287" stop-color="#7dc1ff"/><stop offset=".353" stop-color="#ffa5ff"/><stop offset=".386" stop-color="#ff77c9"/><stop offset=".427" stop-color="#ff519d"/><stop offset=".479" stop-color="#ff337a"/><stop offset=".543" stop-color="#ff1a5d"/><stop offset=".658" stop-color="#ff003f"/><stop offset=".805" stop-color="#ff002a"/><stop offset="1" stop-color="#ff001a"/></linearGradient>
<linearGradient id="r51" gradientUnits="userSpaceOnUse" x1="1038" x2="1641" y1="0" y2="0"><stop offset="0" stop-color="#00ffe5"/><stop offset=".095" stop-color="#0ff"/><stop offset=".217" stop-color="#00d5ff"/><stop offset=".279" stop-color="#6bbeff"/><stop offset=".358" stop-color="#ff9cfc"/><stop offset=".391" stop-color="#ff70c8"/><stop offset=".433" stop-color="#ff4c9d"/><stop offset=".484" stop-color="#ff2f7b"/><stop offset=".549" stop-color="#ff185e"/><stop offset=".657" stop-color="#ff0042"/><stop offset=".804" stop-color="#ff002c"/><stop offset="1" stop-color="#ff001b"/></linearGradient>
<linearGradient id="r52" gradientUnits="userSpaceOnUse" x1="1039" x2="1639" y1="0" y2="0"><stop offset="0" stop-color="#00ffeb"/><stop offset=".073" stop-color="#0ff"/><stop offset=".217" stop-color="#00cfff"/><stop offset=".278" stop-color="#67b8ff"/><stop offset=".362" stop-color="#ff95fc"/><stop offset=".397" stop-color="#ff6ac7"/><stop offset=".438" stop-color="#ff489d"/><stop offset=".49" stop-color="#ff2c7b"/><stop offset=".553" stop-color="#ff1660"/><stop offset=".655" stop-color="#f04"/><stop offset=".803" stop-color="#ff002d"/><stop offset="1" stop-color="#ff001c"/></linearGradient>
<linearGradient id="r53" gradientUnits="userSpaceOnUse" x1="1039" x2="1637" y1="0" y2="0"><stop offset="0" stop-color="#00fff1"/><stop offset=".052" stop-color="#0ff"/><stop offset=".219" stop-color="#01c9ff"/><stop offset=".286" stop-color="#70b0ff"/><stop offset=".366" stop-color="#ff8ffd"/><stop offset=".401" stop-color="#ff66c8"/><stop offset=".443" stop-color="#ff459e"/><stop offset=".495" stop-color="#ff2a7d"/><stop offset=".559" stop-color="#ff1561"/><stop offset=".654" stop-color="#ff0047"/><stop offset=".801" stop-color="#ff002f"/><stop offset="1" stop-color="#ff001e"/></linearGradient>
<linearGradient id="r54" gradientUnits="userSpaceOnUse" x1="1040" x2="1635" y1="0" y2="0"><stop offset="0" stop-color="#00fff7"/><stop offset=".03" stop-color="#0ff"/><stop offset=".218" stop-color="#00c3ff"/><stop offset=".287" stop-color="#70abff"/><stop offset=".37" stop-color="#ff89fd"/><stop offset=".405" stop-color="#ff61c9"/><stop offset=".447" stop-color="#ff42a0"/><stop offset=".499" stop-color="#ff287e"/><stop offset=".563" stop-color="#ff1363"/><stop offset=".652" stop-color="#ff004a"/><stop offset=".8" stop-color="#ff0031"/><stop offset="1" stop-color="#ff001f"/></linearGradient>
<linearGradient id="r55" gradientUnits="userSpaceOnUse" x1="1041" x2="1633" y1="0" y2="0"><stop offset="0" stop-color="#00fffd"/><stop offset=".218" stop-color="#00beff"/><stop offset=".287" stop-color="#6ca6ff"/><stop offset=".373" stop-color="#ff84fd"/><stop offset=".409" stop-color="#ff5dca"/><stop offset=".451" stop-color="#ff3fa1"/><stop offset=".503" stop-color="#ff267f"/><stop offset=".566" stop-color="#ff1264"/><stop offset=".65" stop-color="#ff004c"/><stop offset=".799" stop-color="#f03"/><stop offset="1" stop-color="#ff0020"/></linearGradient>
<linearGradient id="r56" gradientUnits="userSpaceOnUse" x1="1042" x2="1631" y1="0" y2="0"><stop offset="0" stop-color="#00fbff"/><stop offset=".219" stop-color="#00b9ff"/><stop offset=".294" stop-color="#749eff"/><stop offset=".377" stop-color="#ff7efe"/><stop offset=".413" stop-color="#ff59cb"/><stop offset=".455" stop-color="#ff3ca2"/><stop offset=".508" stop-color="#ff2481"/><stop offset=".57" stop-color="#ff1066"/><stop offset=".649" stop-color="#ff004f"/><stop offset=".744" stop-color="#ff003d"/><stop offset="1" stop-color="#f02"/></linearGradient>
<linearGradient id="r57" gradientUnits="userSpaceOnUse" x1="1042" x2="1629" y1="0" y2="0"><stop offset="0" stop-color="#00f5ff"/><stop offset=".22" stop-color="#00b4ff"/><stop offset=".296" stop-color="#7499ff"/><stop offset=".382" stop-color="#ff79fe"/><stop offset=".417" stop-color="#f5c"/><stop offset=".46" stop-color="#ff39a4"/><stop offset=".513" stop-color="#ff2282"/><stop offset=".576" stop-color="#ff0f67"/><stop offset=".647" stop-color="#ff0052"/><stop offset=".746" stop-color="#ff003f"/><stop offset="1" stop-color="#ff0023"/></linearGradient>
<linearGradient id="r58" gradientUnits="userSpaceOnUse" x1="1043" x2="1627" y1="0" y2="0"><stop offset="0" stop-color="#00efff"/><stop offset=".219" stop-color="#00afff"/><stop offset=".296" stop-color="#7195ff"/><stop offset=".385" stop-color="#ff74fe"/><stop offset=".421" stop-color="#ff52cd"/><stop offset=".464" stop-color="#ff37a5"/><stop offset=".515" stop-color="#ff2084"/><stop offset=".579" stop-color="#ff0e69"/><stop offset=".646" stop-color="#f05"/><stop offset=".748" stop-color="#ff0040"/><stop offset="1" stop-color="#ff0024"/></linearGradient>
<linearGradient id="r59" gradientUnits="userSpaceOnUse" x1="1044" x2="1625" y1="0" y2="0"><stop offset="0" stop-color="#00eaff"/><stop offset=".22" stop-color="#0af"/><stop offset=".303" stop-color="#788eff"/><stop offset=".389" stop-color="#ff6ffe"/><stop offset=".425" stop-color="#ff4ecd"/><stop offset=".468" stop-color="#ff34a6"/><stop offset=".52" stop-color="#ff1e86"/><stop offset=".583" stop-color="#ff0c6a"/><stop offset=".644" stop-color="#ff0058"/><stop offset=".752" stop-color="#ff0042"/><stop offset="1" stop-color="#ff0026"/></linearGradient>
<linearGradient id="r60" gradientUnits="userSpaceOnUse" x1="1045" x2="1623" y1="0" y2="0"><stop offset="0" stop-color="#00e4ff"/><stop offset=".22" stop-color="#00a5ff"/><stop offset=".304" stop-color="#788aff"/><stop offset=".393" stop-color="#ff6afe"/><stop offset=".429" stop-color="#ff4bce"/><stop offset=".472" stop-color="#ff31a7"/><stop offset=".524" stop-color="#ff1c87"/><stop offset=".587" stop-color="#ff0b6c"/><stop offset=".642" stop-color="#ff005b"/><stop offset=".754" stop-color="#ff0043"/><stop offset="1" stop-color="#ff0027"/></linearGradient>
<linearGradient id="r61" gradientUnits="userSpaceOnUse" x1="1046" x2="1621" y1="0" y2="0"><stop offset="0" stop-color="#00dfff"/><stop offset=".219" stop-color="#00a1ff"/><stop offset=".304" stop-color="#7586ff"/><stop offset=".397" stop-color="#ff65ff"/><stop offset=".433" stop-color="#ff47cf"/><stop offset=".477" stop-color="#ff2fa8"/><stop offset=".529" stop-color="#ff1a88"/><stop offset=".591" stop-color="#ff096d"/><stop offset=".64" stop-color="#ff005e"/><stop offset=".758" stop-color="#ff0045"/><stop offset="1" stop-color="#ff0028"/></linearGradient>
<linearGradient id="r62" gradientUnits="userSpaceOnUse" x1="1047" x2="1619" y1="0" y2="0"><stop offset="0" stop-color="#00daff"/><stop offset=".22" stop-color="#009dff"/><stop offset=".311" stop-color="#7c80ff"/><stop offset=".4" stop-color="#ff61ff"/><stop offset=".435" stop-color="#ff45d2"/><stop offset=".479" stop-color="#ff2dab"/><stop offset=".531" stop-color="#ff198a"/><stop offset=".594" stop-color="#ff086f"/><stop offset=".638" stop-color="#ff0061"/><stop offset=".76" stop-color="#ff0046"/><stop offset="1" stop-color="#ff002a"/></linearGradient>
<linearGradient id="r63" gradientUnits="userSpaceOnUse" x1="1047" x2="1617" y1="0" y2="0"><stop offset="0" stop-color="#00d4ff"/><stop offset=".221" stop-color="#0098ff"/><stop offset=".309" stop-color="#737cff"/><stop offset=".407" stop-color="#ff5afe"/><stop offset=".444" stop-color="#ff3fd0"/><stop offset=".488" stop-color="#ff29aa"/><stop offset=".54" stop-color="#ff168a"/><stop offset=".602" stop-color="#ff0670"/><stop offset=".635" stop-color="#f06"/><stop offset=".765" stop-color="#ff0048"/><stop offset="1" stop-color="#ff002c"/></linearGradient>
<linearGradient id="r64" gradientUnits="userSpaceOnUse" x1="1049" x2="1613" y1="0" y2="0"><stop offset="0" stop-color="#00cdff"/><stop offset=".222" stop-color="#0192ff"/><stop offset=".316" stop-color="#7975ff"/><stop offset=".413" stop-color="#ff54fe"/><stop offset=".45" stop-color="#ff3bd1"/><stop offset=".493" stop-color="#ff26ad"/><stop offset=".546" stop-color="#ff148d"/><stop offset=".608" stop-color="#ff0573"/><stop offset=".633" stop-color="#ff006b"/><stop offset=".77" stop-color="#ff004b"/><stop offset="1" stop-color="#ff002e"/></linearGradient>
<linearGradient id="r65" gradientUnits="userSpaceOnUse" x1="1050" x2="1610" y1="0" y2="0"><stop offset="0" stop-color="#00c6ff"/><stop offset=".221" stop-color="#008cff"/><stop offset=".318" stop-color="#776fff"/><stop offset=".42" stop-color="#ff4efe"/><stop offset=".457" stop-color="#ff36d2"/><stop offset=".5" stop-color="#ff22ae"/><stop offset=".552" stop-color="#ff1190"/><stop offset=".614" stop-color="#ff0375"/><stop offset=".688" stop-color="#ff005f"/><stop offset=".775" stop-color="#ff004d"/><stop offset="1" stop-color="#ff0030"/></linearGradient>
<linearGradient id="r66" gradientUnits="userSpaceOnUse" x1="1051" x2="1607" y1="0" y2="0"><stop offset="0" stop-color="#00c0ff"/><stop offset=".223" stop-color="#0187ff"/><stop offset=".326" stop-color="#7c69ff"/><stop offset=".426" stop-color="#ff49ff"/><stop offset=".464" stop-color="#ff32d3"/><stop offset=".507" stop-color="#ff1fb0"/><stop offset=".559" stop-color="#ff0f91"/><stop offset=".621" stop-color="#ff0177"/><stop offset=".692" stop-color="#ff0062"/><stop offset=".779" stop-color="#ff004f"/><stop offset="1" stop-color="#ff0032"/></linearGradient>
<linearGradient id="r67" gradientUnits="userSpaceOnUse" x1="1053" x2="1604" y1="0" y2="0"><stop offset="0" stop-color="#00b9ff"/><stop offset=".221" stop-color="#0082ff"/><stop offset=".327" stop-color="#7a64ff"/><stop offset=".432" stop-color="#ff43ff"/><stop offset=".47" stop-color="#ff2ed4"/><stop offset=".514" stop-color="#ff1cb1"/><stop offset=".564" stop-color="#ff0d94"/><stop offset=".626" stop-color="#ff007a"/><stop offset=".697" stop-color="#ff0064"/><stop offset=".782" stop-color="#ff0052"/><stop offset="1" stop-color="#ff0035"/></linearGradient>
<linearGradient id="r68" gradientUnits="userSpaceOnUse" x1="1054" x2="1601" y1="0" y2="0"><stop offset="0" stop-color="#00b4ff"/><stop offset=".223" stop-color="#017dff"/><stop offset=".333" stop-color="#7d5eff"/><stop offset=".439" stop-color="#ff3eff"/><stop offset=".477" stop-color="#ff2ad5"/><stop offset=".521" stop-color="#ff19b3"/><stop offset=".572" stop-color="#ff0a95"/><stop offset=".633" stop-color="#ff007c"/><stop offset=".704" stop-color="#f06"/><stop offset=".788" stop-color="#ff0054"/><stop offset="1" stop-color="#ff0037"/></linearGradient>
<linearGradient id="r69" gradientUnits="userSpaceOnUse" x1="1055" x2="1598" y1="0" y2="0"><stop offset="0" stop-color="#00aeff"/><stop offset=".223" stop-color="#0078ff"/><stop offset=".333" stop-color="#795aff"/><stop offset=".446" stop-color="#ff39ff"/><stop offset=".484" stop-color="#ff26d6"/><stop offset=".529" stop-color="#ff16b4"/><stop offset=".58" stop-color="#ff0897"/><stop offset=".639" stop-color="#ff007e"/><stop offset=".709" stop-color="#ff0069"/><stop offset=".792" stop-color="#ff0056"/><stop offset="1" stop-color="#ff0039"/></linearGradient>
<linearGradient id="r70" gradientUnits="userSpaceOnUse" x1="1057" x2="1595" y1="0" y2="0"><stop offset="0" stop-color="#00a8ff"/><stop offset=".223" stop-color="#0173ff"/><stop offset=".333" stop-color="#7556ff"/><stop offset=".454" stop-color="#ff33fd"/><stop offset=".491" stop-color="#ff22d7"/><stop offset=".535" stop-color="#ff13b5"/><stop offset=".613" stop-color="#ff008d"/><stop offset=".647" stop-color="#ff0080"/><stop offset=".797" stop-color="#ff0059"/><stop offset="1" stop-color="#ff003c"/></linearGradient>
<linearGradient id="r71" gradientUnits="userSpaceOnUse" x1="1058" x2="1592" y1="0" y2="0"><stop offset="0" stop-color="#00a3ff"/><stop offset=".223" stop-color="#006fff"/><stop offset=".335" stop-color="#7452ff"/><stop offset=".461" stop-color="#ff2ffe"/><stop offset=".498" stop-color="#ff1ed8"/><stop offset=".543" stop-color="#ff10b7"/><stop offset=".61" stop-color="#ff0093"/><stop offset=".654" stop-color="#ff0082"/><stop offset=".801" stop-color="#ff005b"/><stop offset="1" stop-color="#ff003e"/></linearGradient>
<linearGradient id="r72" gradientUnits="userSpaceOnUse" x1="1059" x2="1589" y1="0" y2="0"><stop offset="0" stop-color="#009eff"/><stop offset=".225" stop-color="#006bff"/><stop offset=".343" stop-color="#784dff"/><stop offset=".468" stop-color="#ff2bfe"/><stop offset=".506" stop-color="#ff1bd9"/><stop offset=".549" stop-color="#ff0eb9"/><stop offset=".609" stop-color="#f09"/><stop offset=".658" stop-color="#ff0085"/><stop offset=".804" stop-color="#ff005e"/><stop offset="1" stop-color="#ff0041"/></linearGradient>
<linearGradient id="r73" gradientUnits="userSpaceOnUse" x1="1061" x2="1586" y1="0" y2="0"><stop offset="0" stop-color="#09f"/><stop offset=".223" stop-color="#0067ff"/><stop offset=".343" stop-color="#754aff"/><stop offset=".474" stop-color="#ff26fe"/><stop offset=".512" stop-color="#ff18da"/><stop offset=".556" stop-color="#ff0bba"/><stop offset=".606" stop-color="#ff009f"/><stop offset=".665" stop-color="#ff0087"/><stop offset=".81" stop-color="#ff0060"/><stop offset="1" stop-color="#ff0043"/></linearGradient>
<linearGradient id="r74" gradientUnits="userSpaceOnUse" x1="1062" x2="1583" y1="0" y2="0"><stop offset="0" stop-color="#0094ff"/><stop offset=".225" stop-color="#0063ff"/><stop offset=".353" stop-color="#7b44ff"/><stop offset=".482" stop-color="#ff22fe"/><stop offset=".52" stop-color="#ff14db"/><stop offset=".564" stop-color="#ff08bb"/><stop offset=".603" stop-color="#ff00a6"/><stop offset=".672" stop-color="#ff0089"/><stop offset=".814" stop-color="#ff0063"/><stop offset="1" stop-color="#ff0046"/></linearGradient>
<linearGradient id="r75" gradientUnits="userSpaceOnUse" x1="1064" x2="1580" y1="0" y2="0"><stop offset="0" stop-color="#008fff"/><stop offset=".223" stop-color="#0060ff"/><stop offset=".353" stop-color="#7741ff"/><stop offset=".488" stop-color="#ff1eff"/><stop offset=".527" stop-color="#ff11db"/><stop offset=".57" stop-color="#ff06be"/><stop offset=".599" stop-color="#ff00ad"/><stop offset=".676" stop-color="#ff008c"/><stop offset=".816" stop-color="#f06"/><stop offset="1" stop-color="#ff0048"/></linearGradient>
<linearGradient id="r76" gradientUnits="userSpaceOnUse" x1="1065" x2="1577" y1="0" y2="0"><stop offset="0" stop-color="#008bff"/><stop offset=".225" stop-color="#005cff"/><stop offset=".361" stop-color="#7b3dff"/><stop offset=".496" stop-color="#ff1bff"/><stop offset=".535" stop-color="#ff0edc"/><stop offset=".578" stop-color="#ff03bf"/><stop offset=".627" stop-color="#ff00a5"/><stop offset=".684" stop-color="#ff008e"/><stop offset=".82" stop-color="#ff0068"/><stop offset="1" stop-color="#ff004b"/></linearGradient>
<linearGradient id="r77" gradientUnits="userSpaceOnUse" x1="1066" x2="1574" y1="0" y2="0"><stop offset="0" stop-color="#0086ff"/><stop offset=".224" stop-color="#0059ff"/><stop offset=".358" stop-color="#743aff"/><stop offset=".506" stop-color="#ff16fe"/><stop offset=".543" stop-color="#ff0bde"/><stop offset=".587" stop-color="#ff01c0"/><stop offset=".636" stop-color="#ff00a7"/><stop offset=".691" stop-color="#ff0090"/><stop offset=".827" stop-color="#ff006b"/><stop offset="1" stop-color="#ff004e"/></linearGradient>
<linearGradient id="r78" gradientUnits="userSpaceOnUse" x1="1068" x2="1569" y1="0" y2="0"><stop offset="0" stop-color="#0081ff"/><stop offset=".226" stop-color="#0054ff"/><stop offset=".371" stop-color="#7a34ff"/><stop offset=".517" stop-color="#ff12fe"/><stop offset=".555" stop-color="#ff07df"/><stop offset=".597" stop-color="#ff00c3"/><stop offset=".701" stop-color="#ff0093"/><stop offset=".832" stop-color="#ff006f"/><stop offset="1" stop-color="#ff0052"/></linearGradient>
<linearGradient id="r79" gradientUnits="userSpaceOnUse" x1="1070" x2="1565" y1="0" y2="0"><stop offset="0" stop-color="#007bff"/><stop offset=".226" stop-color="#0150ff"/><stop offset=".378" stop-color="#7b30ff"/><stop offset=".527" stop-color="#ff0dff"/><stop offset=".582" stop-color="#ff00d4"/><stop offset=".608" stop-color="#ff00c4"/><stop offset=".709" stop-color="#ff0097"/><stop offset=".838" stop-color="#ff0072"/><stop offset="1" stop-color="#ff0056"/></linearGradient>
<linearGradient id="r80" gradientUnits="userSpaceOnUse" x1="1072" x2="1561" y1="0" y2="0"><stop offset="0" stop-color="#0076ff"/><stop offset=".225" stop-color="#004cff"/><stop offset=".38" stop-color="#792cff"/><stop offset=".538" stop-color="#ff09ff"/><stop offset=".577" stop-color="#ff00e0"/><stop offset=".618" stop-color="#ff00c7"/><stop offset=".718" stop-color="#ff009a"/><stop offset=".843" stop-color="#ff0076"/><stop offset="1" stop-color="#ff005a"/></linearGradient>
<linearGradient id="r81" gradientUnits="userSpaceOnUse" x1="1075" x2="1557" y1="0" y2="0"><stop offset="0" stop-color="#0071ff"/><stop offset=".224" stop-color="#0048ff"/><stop offset=".39" stop-color="#7d27ff"/><stop offset=".548" stop-color="#ff05ff"/><stop offset=".571" stop-color="#ff00ed"/><stop offset=".629" stop-color="#ff00c8"/><stop offset=".726" stop-color="#ff009d"/><stop offset=".849" stop-color="#ff007a"/><stop offset="1" stop-color="#ff005e"/></linearGradient>
<linearGradient id="r82" gradientUnits="userSpaceOnUse" x1="1077" x2="1553" y1="0" y2="0"><stop offset="0" stop-color="#006cff"/><stop offset=".225" stop-color="#0045ff"/><stop offset=".395" stop-color="#7d24ff"/><stop offset=".559" stop-color="#ff01ff"/><stop offset=".639" stop-color="#ff00ca"/><stop offset=".735" stop-color="#ff00a0"/><stop offset=".853" stop-color="#ff007e"/><stop offset="1" stop-color="#ff0062"/></linearGradient>
<linearGradient id="r83" gradientUnits="userSpaceOnUse" x1="1079" x2="1549" y1="0" y2="0"><stop offset="0" stop-color="#0068ff"/><stop offset=".223" stop-color="#0041ff"/><stop offset=".389" stop-color="#7422ff"/><stop offset=".572" stop-color="#ff00fe"/><stop offset=".649" stop-color="#f0c"/><stop offset=".745" stop-color="#ff00a3"/><stop offset=".86" stop-color="#ff0081"/><stop offset="1" stop-color="#f06"/></linearGradient>
<linearGradient id="r84" gradientUnits="userSpaceOnUse" x1="1081" x2="1545" y1="0" y2="0"><stop offset="0" stop-color="#0063ff"/><stop offset=".224" stop-color="#003eff"/><stop offset=".39" stop-color="#7120ff"/><stop offset=".552" stop-color="#e700ff"/><stop offset=".584" stop-color="#ff00fe"/><stop offset=".659" stop-color="#ff00ce"/><stop offset=".752" stop-color="#ff00a6"/><stop offset=".864" stop-color="#ff0085"/><stop offset="1" stop-color="#ff006a"/></linearGradient>
<linearGradient id="r85" gradientUnits="userSpaceOnUse" x1="1083" x2="1541" y1="0" y2="0"><stop offset="0" stop-color="#005fff"/><stop offset=".225" stop-color="#003bff"/><stop offset=".389" stop-color="#6c1eff"/><stop offset=".546" stop-color="#da00ff"/><stop offset=".596" stop-color="#f0f"/><stop offset=".672" stop-color="#ff00cf"/><stop offset=".762" stop-color="#ff00a9"/><stop offset=".871" stop-color="#ff0089"/><stop offset="1" stop-color="#ff006e"/></linearGradient>
<linearGradient id="r86" gradientUnits="userSpaceOnUse" x1="1086" x2="1537" y1="0" y2="0"><stop offset="0" stop-color="#005bff"/><stop offset=".224" stop-color="#0138ff"/><stop offset=".384" stop-color="#661dff"/><stop offset=".539" stop-color="#ce00ff"/><stop offset=".608" stop-color="#f0f"/><stop offset=".681" stop-color="#ff00d3"/><stop offset=".769" stop-color="#ff00ad"/><stop offset=".874" stop-color="#ff008e"/><stop offset="1" stop-color="#ff0073"/></linearGradient>
<linearGradient id="r87" gradientUnits="userSpaceOnUse" x1="1088" x2="1533" y1="0" y2="0"><stop offset="0" stop-color="#0057ff"/><stop offset=".222" stop-color="#0035ff"/><stop offset=".378" stop-color="#5e1bff"/><stop offset=".533" stop-color="#c200ff"/><stop offset=".622" stop-color="#ff00fe"/><stop offset=".694" stop-color="#ff00d4"/><stop offset=".78" stop-color="#ff00b0"/><stop offset=".881" stop-color="#ff0092"/><stop offset="1" stop-color="#ff0078"/></linearGradient>
<linearGradient id="r88" gradientUnits="userSpaceOnUse" x1="1091" x2="1527" y1="0" y2="0"><stop offset="0" stop-color="#0052ff"/><stop offset=".222" stop-color="#0031ff"/><stop offset=".525" stop-color="#b500ff"/><stop offset=".64" stop-color="#f0f"/><stop offset=".709" stop-color="#ff00d7"/><stop offset=".791" stop-color="#ff00b5"/><stop offset=".888" stop-color="#ff0097"/><stop offset="1" stop-color="#ff007e"/></linearGradient>
<linearGradient id="r89" gradientUnits="userSpaceOnUse" x1="1094" x2="1522" y1="0" y2="0"><stop offset="0" stop-color="#004dff"/><stop offset=".222" stop-color="#002eff"/><stop offset=".516" stop-color="#a800ff"/><stop offset=".657" stop-color="#f0f"/><stop offset=".724" stop-color="#ff00d9"/><stop offset=".804" stop-color="#ff00b9"/><stop offset=".895" stop-color="#ff009d"/><stop offset="1" stop-color="#ff0085"/></linearGradient>
<linearGradient id="r90" gradientUnits="userSpaceOnUse" x1="1097" x2="1517" y1="0" y2="0"><stop offset="0" stop-color="#0049ff"/><stop offset=".221" stop-color="#012bff"/><stop offset=".507" stop-color="#9c00ff"/><stop offset=".674" stop-color="#f0f"/><stop offset=".74" stop-color="#ff00dc"/><stop offset=".814" stop-color="#ff00bd"/><stop offset=".9" stop-color="#ff00a3"/><stop offset="1" stop-color="#ff008b"/></linearGradient>
<linearGradient id="r91" gradientUnits="userSpaceOnUse" x1="1100" x2="1512" y1="0" y2="0"><stop offset="0" stop-color="#0045ff"/><stop offset=".221" stop-color="#0128ff"/><stop offset=".498" stop-color="#9100ff"/><stop offset=".692" stop-color="#f0f"/><stop offset=".757" stop-color="#ff00de"/><stop offset=".828" stop-color="#ff00c1"/><stop offset="1" stop-color="#ff0092"/></linearGradient>
<linearGradient id="r92" gradientUnits="userSpaceOnUse" x1="1103" x2="1507" y1="0" y2="0"><stop offset="0" stop-color="#0041ff"/><stop offset=".22" stop-color="#0125ff"/><stop offset=".488" stop-color="#8600ff"/><stop offset=".71" stop-color="#fe00ff"/><stop offset=".775" stop-color="#ff00df"/><stop offset=".839" stop-color="#ff00c6"/><stop offset="1" stop-color="#f09"/></linearGradient>
<linearGradient id="r93" gradientUnits="userSpaceOnUse" x1="1106" x2="1502" y1="0" y2="0"><stop offset="0" stop-color="#003dff"/><stop offset=".217" stop-color="#02f"/><stop offset=".477" stop-color="#7c00ff"/><stop offset=".73" stop-color="#fe00ff"/><stop offset=".854" stop-color="#ff00ca"/><stop offset="1" stop-color="#ff00a0"/></linearGradient>
<linearGradient id="r94" gradientUnits="userSpaceOnUse" x1="1109" x2="1497" y1="0" y2="0"><stop offset="0" stop-color="#0039ff"/><stop offset=".216" stop-color="#0020ff"/><stop offset=".466" stop-color="#7200ff"/><stop offset=".75" stop-color="#fe00ff"/><stop offset=".866" stop-color="#ff00ce"/><stop offset="1" stop-color="#ff00a7"/></linearGradient>
<linearGradient id="r95" gradientUnits="userSpaceOnUse" x1="1112" x2="1492" y1="0" y2="0"><stop offset="0" stop-color="#0035ff"/><stop offset=".216" stop-color="#001dff"/><stop offset=".453" stop-color="#6700ff"/><stop offset=".774" stop-color="#fe00ff"/><stop offset=".879" stop-color="#ff00d4"/><stop offset="1" stop-color="#ff00af"/></linearGradient>
<linearGradient id="r96" gradientUnits="userSpaceOnUse" x1="1115" x2="1486" y1="0" y2="0"><stop offset="0" stop-color="#0031ff"/><stop offset=".216" stop-color="#001aff"/><stop offset=".439" stop-color="#5c00ff"/><stop offset=".801" stop-color="#fe00ff"/><stop offset=".898" stop-color="#ff00d8"/><stop offset="1" stop-color="#ff00b9"/></linearGradient>
<linearGradient id="r97" gradientUnits="userSpaceOnUse" x1="1119" x2="1479" y1="0" y2="0"><stop offset="0" stop-color="#002dff"/><stop offset=".214" stop-color="#0017ff"/><stop offset=".425" stop-color="#5200ff"/><stop offset=".833" stop-color="#f0f"/><stop offset=".911" stop-color="#ff00e0"/><stop offset="1" stop-color="#ff00c4"/></linearGradient>
<linearGradient id="r98" gradientUnits="userSpaceOnUse" x1="1123" x2="1473" y1="0" y2="0"><stop offset="0" stop-color="#0029ff"/><stop offset=".211" stop-color="#0014ff"/><stop offset=".409" stop-color="#4900ff"/><stop offset=".863" stop-color="#f0f"/><stop offset="1" stop-color="#ff00cf"/></linearGradient>
<linearGradient id="r99" gradientUnits="userSpaceOnUse" x1="1127" x2="1467" y1="0" y2="0"><stop offset="0" stop-color="#0026ff"/><stop offset=".209" stop-color="#0012ff"/><stop offset=".391" stop-color="#4000ff"/><stop offset=".894" stop-color="#f0f"/><stop offset="1" stop-color="#ff00da"/></linearGradient>
<linearGradient id="r100" gradientUnits="userSpaceOnUse" x1="1131" x2="1461" y1="0" y2="0"><stop offset="0" stop-color="#02f"/><stop offset=".206" stop-color="#0010ff"/><stop offset=".373" stop-color="#3700ff"/><stop offset=".655" stop-color="#90f"/><stop offset=".927" stop-color="#fe00ff"/><stop offset="1" stop-color="#ff00e6"/></linearGradient>
<linearGradient id="r101" gradientUnits="userSpaceOnUse" x1="1135" x2="1455" y1="0" y2="0"><stop offset="0" stop-color="#001fff"/><stop offset=".203" stop-color="#000dff"/><stop offset=".353" stop-color="#2f00ff"/><stop offset=".662" stop-color="#9500ff"/><stop offset=".963" stop-color="#fe00ff"/><stop offset="1" stop-color="#ff00f3"/></linearGradient>
<linearGradient id="r102" gradientUnits="userSpaceOnUse" x1="1139" x2="1449" y1="0" y2="0"><stop offset="0" stop-color="#001bff"/><stop offset=".2" stop-color="#000bff"/><stop offset=".332" stop-color="#2700ff"/><stop offset=".671" stop-color="#9000ff"/><stop offset="1" stop-color="#fe00ff"/></linearGradient>
<linearGradient id="r103" gradientUnits="userSpaceOnUse" x1="1143" x2="1443" y1="0" y2="0"><stop offset="0" stop-color="#0018ff"/><stop offset=".197" stop-color="#0009ff"/><stop offset=".31" stop-color="#2000ff"/><stop offset=".66" stop-color="#8600ff"/><stop offset="1" stop-color="#f100ff"/></linearGradient>
<linearGradient id="r104" gradientUnits="userSpaceOnUse" x1="1147" x2="1436" y1="0" y2="0"><stop offset="0" stop-color="#0015ff"/><stop offset=".194" stop-color="#0007ff"/><stop offset=".287" stop-color="#1900ff"/><stop offset=".651" stop-color="#7c00ff"/><stop offset="1" stop-color="#e300ff"/></linearGradient>
<linearGradient id="r105" gradientUnits="userSpaceOnUse" x1="1152" x2="1430" y1="0" y2="0"><stop offset="0" stop-color="#0012ff"/><stop offset=".187" stop-color="#0005ff"/><stop offset=".259" stop-color="#1200ff"/><stop offset=".637" stop-color="#7300ff"/><stop offset="1" stop-color="#d700ff"/></linearGradient>
<linearGradient id="r106" gradientUnits="userSpaceOnUse" x1="1156" x2="1424" y1="0" y2="0"><stop offset="0" stop-color="#000fff"/><stop offset=".183" stop-color="#0003ff"/><stop offset=".597" stop-color="#6400ff"/><stop offset="1" stop-color="#c0f"/></linearGradient>
<linearGradient id="r107" gradientUnits="userSpaceOnUse" x1="1161" x2="1418" y1="0" y2="0"><stop offset="0" stop-color="#000cff"/><stop offset=".175" stop-color="#0001ff"/><stop offset=".595" stop-color="#5f00ff"/><stop offset="1" stop-color="#c100ff"/></linearGradient>
<linearGradient id="r108" gradientUnits="userSpaceOnUse" x1="1165" x2="1412" y1="0" y2="0"><stop offset="0" stop-color="#000aff"/><stop offset=".17" stop-color="#00f"/><stop offset="1" stop-color="#b600ff"/></linearGradient>
<linearGradient id="r109" gradientUnits="userSpaceOnUse" x1="1170" x2="1406" y1="0" y2="0"><stop offset="0" stop-color="#0007ff"/><stop offset=".161" stop-color="#00f"/><stop offset="1" stop-color="#ac00ff"/></linearGradient>
<linearGradient id="r110" gradientUnits="userSpaceOnUse" x1="1175" x2="1400" y1="0" y2="0"><stop offset="0" stop-color="#0004ff"/><stop offset=".151" stop-color="#00f"/><stop offset="1" stop-color="#a300ff"/></linearGradient>
<linearGradient id="r111" gradientUnits="userSpaceOnUse" x1="1180" x2="1393" y1="0" y2="0"><stop offset="0" stop-color="#0002ff"/><stop offset=".141" stop-color="#00f"/><stop offset="1" stop-color="#90f"/></linearGradient>
<linearGradient id="r112" gradientUnits="userSpaceOnUse" x1="1185" x2="1387" y1="0" y2="0"><stop offset="0" stop-color="#00f"/><stop offset=".129" stop-color="#00f"/><stop offset="1" stop-color="#9000ff"/></linearGradient>
<linearGradient id="r113" gradientUnits="userSpaceOnUse" x1="1190" x2="1381" y1="0" y2="0"><stop offset="0" stop-color="#00f"/><stop offset=".115" stop-color="#00f"/><stop offset="1" stop-color="#8700ff"/></linearGradient>
<linearGradient id="r114" gradientUnits="userSpaceOnUse" x1="1195" x2="1375" y1="0" y2="0"><stop offset="0" stop-color="#00f"/><stop offset=".1" stop-color="#00f"/><stop offset="1" stop-color="#7f00ff"/></linearGradient>
<linearGradient id="r115" gradientUnits="userSpaceOnUse" x1="1201" x2="1369" y1="0" y2="0"><stop offset="0" stop-color="#00f"/><stop offset=".077" stop-color="#00f"/><stop offset="1" stop-color="#70f"/></linearGradient>
<linearGradient id="r116" gradientUnits="userSpaceOnUse" x1="1207" x2="1363" y1="0" y2="0"><stop offset="0" stop-color="#00f"/><stop offset=".051" stop-color="#00f"/><stop offset="1" stop-color="#7000ff"/></linearGradient>
<linearGradient id="r117" gradientUnits="userSpaceOnUse" x1="1213" x2="1357" y1="0" y2="0"><stop offset="0" stop-color="#00f"/><stop offset="1" stop-color="#6900ff"/></linearGradient>
<linearGradient id="r118" gradientUnits="userSpaceOnUse" x1="1219" x2="1350" y1="0" y2="0"><stop offset="0" stop-color="#0100ff"/><stop offset="1" stop-color="#6100ff"/></linearGradient>
<linearGradient id="r119" gradientUnits="userSpaceOnUse" x1="1226" x2="1344" y1="0" y2="0"><stop offset="0" stop-color="#0600ff"/><stop offset="1" stop-color="#5a00ff"/></linearGradient>
<linearGradient id="r120" gradientUnits="userSpaceOnUse" x1="1233" x2="1338" y1="0" y2="0"><stop offset="0" stop-color="#0a00ff"/><stop offset="1" stop-color="#5400ff"/></linearGradient>
<linearGradient id="r121" gradientUnits="userSpaceOnUse" x1="1241" x2="1332" y1="0" y2="0"><stop offset="0" stop-color="#0e00ff"/><stop offset="1" stop-color="#4e00ff"/></linearGradient>
<linearGradient id="r122" gradientUnits="userSpaceOnUse" x1="1248" x2="1326" y1="0" y2="0"><stop offset="0" stop-color="#1200ff"/><stop offset="1" stop-color="#4700ff"/></linearGradient>
<linearGradient id="r123" gradientUnits="userSpaceOnUse" x1="1256" x2="1320" y1="0" y2="0"><stop offset="0" stop-color="#1600ff"/><stop offset="1" stop-color="#4200ff"/></linearGradient>
<linearGradient id="r124" gradientUnits="userSpaceOnUse" x1="1263" x2="1314" y1="0" y2="0"><stop offset="0" stop-color="#1a00ff"/><stop offset="1" stop-color="#3c00ff"/></linearGradient>
<linearGradient id="r125" gradientUnits="userSpaceOnUse" x1="1270" x2="1307" y1="0" y2="0"><stop offset="0" stop-color="#1e00ff"/><stop offset="1" stop-color="#3600ff"/></linearGradient>
<linearGradient id="r126" gradientUnits="userSpaceOnUse" x1="1278" x2="1301" y1="0" y2="0"><stop offset="0" stop-color="#20f"/><stop offset="1" stop-color="#3000ff"/></linearGradient>
<linearGradient id="r127" gradientUnits="userSpaceOnUse" x1="1286" x2="1295" y1="0" y2="0"><stop offset="0" stop-color="#2600ff"/><stop offset="1" stop-color="#2b00ff"/></linearGradient>
<clipPath id="loc"><path d="M1286.8 537.8L1286.2 537.5L1285.6 537.0L1284.9 536.6L1284.3 536.1L1283.5 535.5L1282.7 534.9L1281.8 534.2L1280.9 533.5L1279.9 532.8L1278.8 531.9L1277.7 531.0L1276.5 530.1L1275.3 529.1L1274.0 528.0L1272.7 526.9L1271.3 525.7L1269.8 524.5L1268.2 523.2L1266.6 521.9L1264.9 520.5L1263.1 519.1L1261.1 517.5L1259.1 515.9L1257.0 514.2L1254.7 512.4L1252.4 510.5L1249.9 508.5L1247.4 506.5L1244.8 504.4L1242.1 502.2L1239.2 499.9L1236.3 497.5L1233.2 494.9L1230.0 492.2L1226.7 489.3L1223.2 486.2L1219.7 483.0L1216.0 479.6L1212.2 476.0L1208.3 472.2L1204.2 468.0L1199.8 463.3L1195.1 458.1L1190.1 452.4L1184.7 446.2L1179.1 439.4L1173.3 432.3L1167.4 424.6L1161.3 416.6L1155.0 408.1L1148.6 399.2L1142.0 389.8L1135.3 379.9L1128.6 369.7L1121.8 359.0L1114.9 348.1L1108.1 337.1L1101.3 325.8L1094.6 314.4L1088.0 303.0L1081.6 291.5L1075.5 280.0L1069.7 268.6L1064.3 257.3L1059.2 246.4L1054.4 235.6L1050.0 225.2L1045.8 215.1L1042.0 205.4L1038.5 196.1L1035.4 187.3L1032.6 179.0L1030.2 171.2L1028.1 163.8L1026.4 157.0L1024.9 150.6L1023.7 144.6L1022.7 139.1L1022.1 133.9L1021.6 129.2L1021.5 124.8L1021.5 120.7L1021.8 116.9L1022.3 113.4L1022.9 110.1L1023.8 107.1L1024.9 104.3L1026.2 101.7L1027.7 99.4L1029.3 97.3L1031.1 95.5L1033.1 93.9L1035.1 92.4L1037.4 91.2L1039.7 90.2L1042.1 89.3L1044.6 88.5L1047.2 87.9L1049.9 87.5L1052.6 87.1L1055.4 86.8L1058.3 86.6L1061.2 86.4L1064.2 86.3L1067.2 86.2L1070.2 86.1L1073.3 86.1L1076.3 86.1L1079.3 86.1L1082.3 86.1L1085.4 86.2L1088.4 86.3L1091.5 86.4L1094.7 86.5L1097.8 86.6L1101.0 86.8L1104.3 87.0L1107.6 87.2L1111.0 87.4L1114.4 87.6L1117.8 87.9L1121.4 88.2L1124.9 88.5L1128.6 88.8L1132.3 89.1L1136.1 89.4L1139.9 89.8L1143.8 90.2L1147.8 90.6L1151.9 91.0L1156.1 91.4L1160.3 91.8L1164.7 92.2L1169.1 92.7L1173.6 93.2L1178.2 93.7L1182.9 94.2L1187.7 94.7L1192.6 95.2L1197.6 95.7L1202.7 96.3L1207.9 96.9L1213.2 97.4L1218.6 98.0L1224.2 98.6L1229.8 99.3L1235.5 99.9L1241.4 100.5L1247.4 101.2L1253.4 101.9L1259.6 102.6L1265.9 103.3L1272.4 104.0L1278.9 104.7L1285.5 105.5L1292.3 106.2L1299.1 107.0L1306.1 107.8L1313.1 108.6L1320.3 109.4L1327.5 110.2L1334.9 111.0L1342.3 111.8L1349.8 112.6L1357.4 113.5L1365.0 114.3L1372.7 115.2L1380.5 116.1L1388.3 116.9L1396.1 117.8L1403.9 118.7L1411.6 119.5L1419.3 120.4L1426.9 121.2L1434.4 122.1L1441.9 122.9L1449.3 123.8L1456.8 124.6L1464.2 125.4L1471.6 126.2L1478.9 127.0L1486.0 127.8L1493.0 128.6L1499.7 129.4L1506.3 130.1L1512.8 130.8L1519.2 131.5L1525.3 132.2L1531.4 132.9L1537.2 133.5L1543.0 134.2L1548.5 134.8L1553.8 135.4L1559.0 136.0L1564.0 136.5L1568.8 137.1L1573.5 137.6L1578.0 138.1L1582.3 138.6L1586.5 139.0L1590.6 139.5L1594.5 139.9L1598.2 140.3L1601.9 140.7L1605.4 141.1L1608.8 141.5L1612.1 141.9L1615.3 142.2L1618.5 142.6L1621.6 142.9L1624.5 143.3L1627.4 143.6L1630.2 143.9L1632.9 144.2L1635.4 144.5L1637.9 144.8L1640.3 145.0L1642.6 145.3L1644.9 145.5L1647.0 145.8L1649.0 146.0L1650.9 146.2L1652.7 146.4L1654.4 146.6L1656.0 146.8L1657.5 147.0L1658.9 147.1L1660.3 147.3L1661.6 147.4L1662.9 147.6L1664.0 147.7L1665.2 147.8L1666.2 147.9L1667.2 148.0L1668.2 148.2L1669.1 148.3L1669.9 148.3L1670.6 148.4L1671.3 148.5L1671.9 148.6L1672.5 148.6L1673.0 148.7L1673.6 148.8L1674.1 148.8L1674.6 148.9L1675.1 148.9L1675.6 149.0L1676.0 149.0L1676.4 149.1L1676.8 149.1L1677.2 149.2L1677.6 149.2L1678.0 149.3L1678.4 149.3L1678.8 149.3L1679.2 149.4L1679.6 149.4L1680.0 149.5L1680.4 149.5L1680.7 149.6L1681.1 149.6L1681.4 149.6L1681.7 149.7L1681.9 149.7L1682.1 149.7L1682.3 149.7L1682.4 149.7L1682.5 149.8L1682.7 149.8L1682.8 149.8L1682.9 149.8L1683.0 149.8L1683.1 149.8L1683.1 149.8L1683.2 149.8L1683.3 149.8L1683.3 149.8L1683.3 157.3L1296.1 536.9 Q1292.1 540.7 1286.8 537.8Z"/></clipPath>
<filter id="vb" filterUnits="userSpaceOnUse" x="1020" y="78" width="639" height="475"><feGaussianBlur stdDeviation="0 1.5"/></filter>
<clipPath id="plt"><rect x="1020" y="76.6" width="638.8" height="476.4"/></clipPath>
<linearGradient id="rbr" x1="0" y1="0" x2="0" y2="1"><stop offset="0" stop-color="#ff0000"/><stop offset="0.55" stop-color="#f80000"/><stop offset="1" stop-color="#900000"/></linearGradient>
<linearGradient id="rbg" x1="0" y1="0" x2="0" y2="1"><stop offset="0" stop-color="#006000"/><stop offset="0.4" stop-color="#009000"/><stop offset="1" stop-color="#00b000"/></linearGradient>
<linearGradient id="rbb" x1="0" y1="0" x2="0" y2="1"><stop offset="0" stop-color="#0000ff"/><stop offset="0.55" stop-color="#0000f4"/><stop offset="1" stop-color="#000078"/></linearGradient>
<linearGradient id="thd" x1="0" y1="0" x2="0" y2="1"><stop offset="0" stop-color="#2c2c2c"/><stop offset="0.47" stop-color="#323232"/><stop offset="0.51" stop-color="#161616"/><stop offset="1" stop-color="#131313"/></linearGradient>
<linearGradient id="trh" x1="0" y1="0" x2="0" y2="1"><stop offset="0" stop-color="#343434"/><stop offset="1" stop-color="#202020"/></linearGradient>
<clipPath id="tbl"><rect x="997" y="603" width="634" height="191.3"/></clipPath>
<linearGradient id="sbv" x1="0" y1="0" x2="1" y2="0"><stop offset="0" stop-color="#585858"/><stop offset="1" stop-color="#4a4a4a"/></linearGradient>
<linearGradient id="sbh" x1="0" y1="0" x2="0" y2="1"><stop offset="0" stop-color="#565656"/><stop offset="1" stop-color="#484848"/></linearGradient>
<linearGradient id="gtb" x1="0" y1="0" x2="0" y2="1"><stop offset="0" stop-color="#a2a2a2"/><stop offset="0.08" stop-color="#9a9a9a"/><stop offset="0.5" stop-color="#7c7c7c"/><stop offset="1" stop-color="#565656"/></linearGradient>
<linearGradient id="gsel" x1="0" y1="0" x2="0" y2="1"><stop offset="0" stop-color="#1c1c1c"/><stop offset="0.5" stop-color="#262626"/><stop offset="1" stop-color="#303030"/></linearGradient>
<linearGradient id="gtb2" x1="0" y1="0" x2="0" y2="1"><stop offset="0" stop-color="#b2b2b2"/><stop offset="1" stop-color="#6e6e6e"/></linearGradient>
<linearGradient id="gtb3" x1="0" y1="0" x2="0" y2="1"><stop offset="0" stop-color="#8c8c8c"/><stop offset="0.5" stop-color="#727272"/><stop offset="1" stop-color="#5a5a5a"/></linearGradient>
<linearGradient id="gic" x1="0" y1="0" x2="0" y2="1"><stop offset="0" stop-color="#6a6a6a"/><stop offset="0.5" stop-color="#808080"/><stop offset="1" stop-color="#a0a0a0"/></linearGradient>
</defs>
<rect x="0" y="0" width="1663" height="903" fill="#333"/>
<rect x="0" y="0" width="1663" height="34.2" fill="#222"/>
<rect x="0" y="34.2" width="1.3" height="870" fill="#474747"/>
<rect x="1.3" y="34.2" width="0.8" height="870" fill="#2b2b2b"/>
<rect x="2" y="0" width="72.5" height="33" fill="url(#gtab)"/>
<rect x="75" y="0" width="40.5" height="33" fill="url(#gtab)"/>
<line x1="1.5" y1="0" x2="1.5" y2="33" stroke="#8a8a8a" stroke-width="1"/>
<line x1="74.7" y1="0" x2="74.7" y2="33" stroke="#777" stroke-width="1"/>
<line x1="115.5" y1="0" x2="115.5" y2="33" stroke="#8a8a8a" stroke-width="1"/>
<text x="9" y="21.4" font-size="15" fill="#eee" textLength="58" lengthAdjust="spacingAndGlyphs">History 1</text>
<circle cx="93" cy="17.5" r="12" fill="#2e2e2e"/>
<text x="93" y="22" font-size="13" fill="#999" text-anchor="middle">+</text>
<rect x="1008.2" y="0" width="133.5" height="32.7" fill="url(#gpan)"/>
<rect x="1008.2" y="0" width="8" height="32.7" fill="#1fdc0f"/>
<text x="1019.4" y="9.8" font-size="13.5" fill="#f2f2f2" textLength="82" lengthAdjust="spacingAndGlyphs">X-Rite i1Pro 2</text>
<text x="1019.4" y="28.6" font-size="13.5" fill="#f2f2f2" textLength="69.5" lengthAdjust="spacingAndGlyphs">Direct View</text>
<circle cx="1118" cy="15" r="12" fill="url(#gcirc)"/>
<path d="M1112.3 13 h11.4 l-5.7 6.4z" fill="#fff"/>
<rect x="1142.8" y="0" width="43.700000000000045" height="32.7" fill="url(#gpan)"/>
<circle cx="1167.6" cy="14.8" r="15.3" fill="#0000f0" stroke="#fff" stroke-width="1.2"/>
<text x="1167.6" y="19.2" font-size="12" fill="#fff" text-anchor="middle" font-weight="bold" textLength="19.5" lengthAdjust="spacingAndGlyphs">168</text>
<rect x="1193.8" y="0" width="162.9000000000001" height="32.7" fill="url(#gpan)"/>
<rect x="1193.8" y="0" width="8" height="32.7" fill="#1fdc0f"/>
<text x="1205.5" y="9.8" font-size="13.5" fill="#f2f2f2" textLength="78" lengthAdjust="spacingAndGlyphs">Mobile Forge</text>
<circle cx="1336" cy="15" r="12" fill="url(#gcirc)"/>
<path d="M1330.3 13 h11.4 l-5.7 6.4z" fill="#fff"/>
<rect x="1363.9" y="0" width="179.89999999999986" height="32.7" fill="url(#gpan)"/>
<rect x="1363.9" y="0" width="8" height="32.7" fill="#e8e800"/>
<text x="1375.7" y="9.8" font-size="13.5" fill="#f2f2f2" textLength="131.5" lengthAdjust="spacingAndGlyphs">Direct Display Control</text>
<circle cx="1523.4" cy="15" r="12" fill="url(#gcirc)"/>
<path d="M1517.7 13 h11.4 l-5.7 6.4z" fill="#fff"/>
<path d="M1547.5 -1 V25 q0 5.5 5.5 5.5 H1584.0 q5.5 0 5.5 -5.5 V-1z" fill="url(#gbtn)" stroke="#a0a0a0" stroke-width="1"/>
<circle cx="1568.5" cy="12.8" r="12.3" fill="url(#gcirc2)"/>
<path d="M1592 -1 V25 q0 5.5 5.5 5.5 H1629.0 q5.5 0 5.5 -5.5 V-1z" fill="url(#gbtn)" stroke="#a0a0a0" stroke-width="1"/>
<circle cx="1613.3" cy="12.8" r="12.3" fill="url(#gcirc2)"/>
<text x="1613.2" y="20.6" font-size="21.5" fill="#f4f4f4" text-anchor="middle" font-weight="bold">?</text>
<path d="M1637 -1 V25 q0 5.5 5.5 5.5 H1664.5 q5.5 0 5.5 -5.5 V-1z" fill="url(#gbtn)" stroke="#a0a0a0" stroke-width="1"/>
<circle cx="1658" cy="12.8" r="12.3" fill="url(#gcirc2)"/>
<path d="M1657.8 6.4 v12.4 l-6.8 -6.2z" fill="#f4f4f4"/>
<path d="M1575.1 11.0L1576.9 11.4L1576.9 14.0L1575.1 14.4L1574.3 16.2L1575.3 17.8L1573.5 19.6L1571.9 18.6L1570.1 19.4L1569.7 21.2L1567.1 21.2L1566.7 19.4L1564.9 18.6L1563.3 19.6L1561.5 17.8L1562.5 16.2L1561.7 14.4L1559.9 14.0L1559.9 11.4L1561.7 11.0L1562.5 9.2L1561.5 7.6L1563.3 5.8L1564.9 6.8L1566.7 6.0L1567.1 4.2L1569.7 4.2L1570.1 6.0L1571.9 6.8L1573.5 5.8L1575.3 7.6L1574.3 9.2Z M1568.4 8.0 a4.7 4.7 0 1 0 0.01 0z" fill="#cdcdcd" fill-rule="evenodd"/>
<text x="25.5" y="90" font-size="37.5" fill="#f4f4f4" textLength="223.5" lengthAdjust="spacingAndGlyphs">Color Gamut</text>
<text x="189" y="138.5" font-size="14.5" fill="#dcdcdc" text-anchor="middle" textLength="78.5" lengthAdjust="spacingAndGlyphs">DeltaE 2000</text>
<rect x="21.5" y="143.5" width="336.0" height="400.0" fill="#242424"/>
<line x1="65.5" y1="143.5" x2="65.5" y2="549.0" stroke="#8e8e8e" stroke-width="1.5"/>
<line x1="110.5" y1="143.5" x2="110.5" y2="549.0" stroke="#8e8e8e" stroke-width="1.5"/>
<line x1="155.5" y1="143.5" x2="155.5" y2="549.0" stroke="#8e8e8e" stroke-width="1.5"/>
<line x1="200.5" y1="143.5" x2="200.5" y2="549.0" stroke="#8e8e8e" stroke-width="1.5"/>
<line x1="245.5" y1="143.5" x2="245.5" y2="549.0" stroke="#8e8e8e" stroke-width="1.5"/>
<line x1="288.5" y1="143.5" x2="288.5" y2="549.0" stroke="#8e8e8e" stroke-width="1.5"/>
<line x1="333.5" y1="143.5" x2="333.5" y2="549.0" stroke="#8e8e8e" stroke-width="1.5"/>
<line x1="21.5" y1="143.5" x2="21.5" y2="549.0" stroke="#a0a0a0" stroke-width="1.5"/>
<path d="M21.5 143.5 H357.5 V543.5 H21.5" fill="none" stroke="#a0a0a0" stroke-width="1.5"/>
<text x="21.0" y="565" font-size="14.5" fill="#dcdcdc" text-anchor="middle">0</text>
<text x="65.0" y="565" font-size="14.5" fill="#dcdcdc" text-anchor="middle">2</text>
<text x="110.0" y="565" font-size="14.5" fill="#dcdcdc" text-anchor="middle">4</text>
<text x="155.0" y="565" font-size="14.5" fill="#dcdcdc" text-anchor="middle">6</text>
<text x="200.0" y="565" font-size="14.5" fill="#dcdcdc" text-anchor="middle">8</text>
<text x="245.0" y="565" font-size="14.5" fill="#dcdcdc" text-anchor="middle">10</text>
<text x="288.0" y="565" font-size="14.5" fill="#dcdcdc" text-anchor="middle">12</text>
<text x="333.0" y="565" font-size="14.5" fill="#dcdcdc" text-anchor="middle">14</text>
<rect x="22.3" y="149.6" width="27" height="37.5" fill="url(#bw)" stroke="#000" stroke-width="1.1"/>
<rect x="22.3" y="199.6" width="34.5" height="37.5" fill="url(#by)" stroke="#000" stroke-width="1.1"/>
<rect x="22.3" y="249.6" width="37.5" height="37.5" fill="url(#bm)" stroke="#000" stroke-width="1.1"/>
<rect x="22.3" y="299.6" width="28" height="37.5" fill="url(#bc)" stroke="#000" stroke-width="1.1"/>
<rect x="22.3" y="349.6" width="58.5" height="37.5" fill="url(#bb)" stroke="#000" stroke-width="1.1"/>
<rect x="22.3" y="399.6" width="53" height="37.5" fill="url(#bg)" stroke="#000" stroke-width="1.1"/>
<rect x="22.3" y="449.6" width="81" height="37.5" fill="url(#br)" stroke="#000" stroke-width="1.1"/>
<rect x="22.3" y="499.6" width="7.5" height="37.5" fill="url(#bgr)" stroke="#000" stroke-width="1.1"/>
<text x="469.04999999999995" y="73" font-size="14.5" fill="#dcdcdc" text-anchor="middle">DeltaL</text>
<rect x="409.8" y="78.3" width="144.49999999999994" height="306.0" fill="#242424"/>
<line x1="409.8" y1="130.5" x2="554.3" y2="130.5" stroke="#8e8e8e" stroke-width="1.5"/>
<line x1="409.8" y1="181" x2="554.3" y2="181" stroke="#8e8e8e" stroke-width="1.5"/>
<line x1="409.8" y1="232.3" x2="554.3" y2="232.3" stroke="#8e8e8e" stroke-width="1.5"/>
<line x1="409.8" y1="283.3" x2="554.3" y2="283.3" stroke="#8e8e8e" stroke-width="1.5"/>
<line x1="409.8" y1="334.7" x2="554.3" y2="334.7" stroke="#8e8e8e" stroke-width="1.5"/>
<rect x="409.8" y="78.3" width="144.49999999999994" height="306.0" fill="none" stroke="#a0a0a0" stroke-width="1.5"/>
<line x1="403.8" y1="78.3" x2="409.8" y2="78.3" stroke="#ddd" stroke-width="1.5"/>
<text x="403.3" y="83.7" font-size="14.5" fill="#dcdcdc" text-anchor="end">15</text>
<line x1="403.8" y1="130.5" x2="409.8" y2="130.5" stroke="#ddd" stroke-width="1.5"/>
<text x="403.3" y="135.9" font-size="14.5" fill="#dcdcdc" text-anchor="end">10</text>
<line x1="403.8" y1="181" x2="409.8" y2="181" stroke="#ddd" stroke-width="1.5"/>
<text x="403.3" y="186.4" font-size="14.5" fill="#dcdcdc" text-anchor="end">5</text>
<line x1="403.8" y1="232.3" x2="409.8" y2="232.3" stroke="#ddd" stroke-width="1.5"/>
<text x="403.3" y="237.70000000000002" font-size="14.5" fill="#dcdcdc" text-anchor="end">0</text>
<line x1="403.8" y1="283.3" x2="409.8" y2="283.3" stroke="#ddd" stroke-width="1.5"/>
<text x="403.3" y="288.7" font-size="14.5" fill="#dcdcdc" text-anchor="end">-5</text>
<line x1="403.8" y1="334.7" x2="409.8" y2="334.7" stroke="#ddd" stroke-width="1.5"/>
<text x="403.3" y="340.09999999999997" font-size="14.5" fill="#dcdcdc" text-anchor="end">-10</text>
<line x1="403.8" y1="384.3" x2="409.8" y2="384.3" stroke="#ddd" stroke-width="1.5"/>
<text x="403.3" y="389.7" font-size="14.5" fill="#dcdcdc" text-anchor="end">-15</text>
<line x1="409.8" y1="384.3" x2="409.8" y2="388.3" stroke="#a0a0a0" stroke-width="1.5"/>
<line x1="554.3" y1="384.3" x2="554.3" y2="388.3" stroke="#a0a0a0" stroke-width="1.5"/>
<text x="482.04999999999995" y="400" font-size="14.5" fill="#dcdcdc" text-anchor="middle" textLength="39" lengthAdjust="spacingAndGlyphs">100W</text>
<line x1="424.8" y1="232.3" x2="539.3" y2="232.3" stroke="#1a1a1a" stroke-width="1.2"/>
<text x="666.0" y="73" font-size="14.5" fill="#dcdcdc" text-anchor="middle">DeltaC</text>
<rect x="606.5" y="78.3" width="145.0" height="306.0" fill="#242424"/>
<line x1="606.5" y1="130.5" x2="751.5" y2="130.5" stroke="#8e8e8e" stroke-width="1.5"/>
<line x1="606.5" y1="181" x2="751.5" y2="181" stroke="#8e8e8e" stroke-width="1.5"/>
<line x1="606.5" y1="232.3" x2="751.5" y2="232.3" stroke="#8e8e8e" stroke-width="1.5"/>
<line x1="606.5" y1="283.3" x2="751.5" y2="283.3" stroke="#8e8e8e" stroke-width="1.5"/>
<line x1="606.5" y1="334.7" x2="751.5" y2="334.7" stroke="#8e8e8e" stroke-width="1.5"/>
<rect x="606.5" y="78.3" width="145.0" height="306.0" fill="none" stroke="#a0a0a0" stroke-width="1.5"/>
<line x1="600.5" y1="78.3" x2="606.5" y2="78.3" stroke="#ddd" stroke-width="1.5"/>
<text x="600.0" y="83.7" font-size="14.5" fill="#dcdcdc" text-anchor="end">15</text>
<line x1="600.5" y1="130.5" x2="606.5" y2="130.5" stroke="#ddd" stroke-width="1.5"/>
<text x="600.0" y="135.9" font-size="14.5" fill="#dcdcdc" text-anchor="end">10</text>
<line x1="600.5" y1="181" x2="606.5" y2="181" stroke="#ddd" stroke-width="1.5"/>
<text x="600.0" y="186.4" font-size="14.5" fill="#dcdcdc" text-anchor="end">5</text>
<line x1="600.5" y1="232.3" x2="606.5" y2="232.3" stroke="#ddd" stroke-width="1.5"/>
<text x="600.0" y="237.70000000000002" font-size="14.5" fill="#dcdcdc" text-anchor="end">0</text>
<line x1="600.5" y1="283.3" x2="606.5" y2="283.3" stroke="#ddd" stroke-width="1.5"/>
<text x="600.0" y="288.7" font-size="14.5" fill="#dcdcdc" text-anchor="end">-5</text>
<line x1="600.5" y1="334.7" x2="606.5" y2="334.7" stroke="#ddd" stroke-width="1.5"/>
<text x="600.0" y="340.09999999999997" font-size="14.5" fill="#dcdcdc" text-anchor="end">-10</text>
<line x1="600.5" y1="384.3" x2="606.5" y2="384.3" stroke="#ddd" stroke-width="1.5"/>
<text x="600.0" y="389.7" font-size="14.5" fill="#dcdcdc" text-anchor="end">-15</text>
<line x1="606.5" y1="384.3" x2="606.5" y2="388.3" stroke="#a0a0a0" stroke-width="1.5"/>
<line x1="751.5" y1="384.3" x2="751.5" y2="388.3" stroke="#a0a0a0" stroke-width="1.5"/>
<text x="679.0" y="400" font-size="14.5" fill="#dcdcdc" text-anchor="middle" textLength="39" lengthAdjust="spacingAndGlyphs">100W</text>
<rect x="621.7" y="218.8" width="115.0" height="14" fill="url(#bwv)" stroke="#000" stroke-width="1.4"/>
<text x="863.6" y="73" font-size="14.5" fill="#dcdcdc" text-anchor="middle">DeltaH</text>
<rect x="804.2" y="78.3" width="144.79999999999995" height="306.0" fill="#242424"/>
<line x1="804.2" y1="130.5" x2="949" y2="130.5" stroke="#8e8e8e" stroke-width="1.5"/>
<line x1="804.2" y1="181" x2="949" y2="181" stroke="#8e8e8e" stroke-width="1.5"/>
<line x1="804.2" y1="232.3" x2="949" y2="232.3" stroke="#8e8e8e" stroke-width="1.5"/>
<line x1="804.2" y1="283.3" x2="949" y2="283.3" stroke="#8e8e8e" stroke-width="1.5"/>
<line x1="804.2" y1="334.7" x2="949" y2="334.7" stroke="#8e8e8e" stroke-width="1.5"/>
<rect x="804.2" y="78.3" width="144.79999999999995" height="306.0" fill="none" stroke="#a0a0a0" stroke-width="1.5"/>
<line x1="798.2" y1="78.3" x2="804.2" y2="78.3" stroke="#ddd" stroke-width="1.5"/>
<text x="797.7" y="83.7" font-size="14.5" fill="#dcdcdc" text-anchor="end">15</text>
<line x1="798.2" y1="130.5" x2="804.2" y2="130.5" stroke="#ddd" stroke-width="1.5"/>
<text x="797.7" y="135.9" font-size="14.5" fill="#dcdcdc" text-anchor="end">10</text>
<line x1="798.2" y1="181" x2="804.2" y2="181" stroke="#ddd" stroke-width="1.5"/>
<text x="797.7" y="186.4" font-size="14.5" fill="#dcdcdc" text-anchor="end">5</text>
<line x1="798.2" y1="232.3" x2="804.2" y2="232.3" stroke="#ddd" stroke-width="1.5"/>
<text x="797.7" y="237.70000000000002" font-size="14.5" fill="#dcdcdc" text-anchor="end">0</text>
<line x1="798.2" y1="283.3" x2="804.2" y2="283.3" stroke="#ddd" stroke-width="1.5"/>
<text x="797.7" y="288.7" font-size="14.5" fill="#dcdcdc" text-anchor="end">-5</text>
<line x1="798.2" y1="334.7" x2="804.2" y2="334.7" stroke="#ddd" stroke-width="1.5"/>
<text x="797.7" y="340.09999999999997" font-size="14.5" fill="#dcdcdc" text-anchor="end">-10</text>
<line x1="798.2" y1="384.3" x2="804.2" y2="384.3" stroke="#ddd" stroke-width="1.5"/>
<text x="797.7" y="389.7" font-size="14.5" fill="#dcdcdc" text-anchor="end">-15</text>
<line x1="804.2" y1="384.3" x2="804.2" y2="388.3" stroke="#a0a0a0" stroke-width="1.5"/>
<line x1="949" y1="384.3" x2="949" y2="388.3" stroke="#a0a0a0" stroke-width="1.5"/>
<text x="876.6" y="400" font-size="14.5" fill="#dcdcdc" text-anchor="middle" textLength="39" lengthAdjust="spacingAndGlyphs">100W</text>
<line x1="819.2" y1="232.3" x2="934.0" y2="232.3" stroke="#1a1a1a" stroke-width="1.2"/>
<rect x="376.6" y="416.6" width="592.4" height="156.6" fill="#000"/>
<rect x="394.3" y="423.3" width="61.6" height="127.8" fill="#c6c5c5"/>
<rect x="394.3" y="487.5" width="61.6" height="63.6" fill="#c6c5c5"/>
<rect x="394.3" y="423.3" width="61.6" height="127.8" fill="none" stroke="#f0f0f0" stroke-width="1"/>
<text x="425.1" y="566" font-size="13.5" fill="#f4f4f4" text-anchor="middle">White</text>
<rect x="466.6" y="423.3" width="61.6" height="127.8" fill="#d01800"/>
<rect x="466.6" y="487.5" width="61.6" height="63.6" fill="#c41014"/>
<rect x="466.6" y="423.3" width="61.6" height="127.8" fill="none" stroke="#f0f0f0" stroke-width="1"/>
<text x="497.4" y="566" font-size="13.5" fill="#f4f4f4" text-anchor="middle">Red</text>
<rect x="539.0" y="423.3" width="61.6" height="127.8" fill="#30cc00"/>
<rect x="539.0" y="487.5" width="61.6" height="63.6" fill="#10c414"/>
<rect x="539.0" y="423.3" width="61.6" height="127.8" fill="none" stroke="#f0f0f0" stroke-width="1"/>
<text x="569.8" y="566" font-size="13.5" fill="#f4f4f4" text-anchor="middle">Green</text>
<rect x="611.3" y="423.3" width="61.6" height="127.8" fill="#0028cc"/>
<rect x="611.3" y="487.5" width="61.6" height="63.6" fill="#2018c4"/>
<rect x="611.3" y="423.3" width="61.6" height="127.8" fill="none" stroke="#f0f0f0" stroke-width="1"/>
<text x="642.1" y="566" font-size="13.5" fill="#f4f4f4" text-anchor="middle">Blue</text>
<rect x="683.6" y="423.3" width="61.6" height="127.8" fill="#20c8c8"/>
<rect x="683.6" y="487.5" width="61.6" height="63.6" fill="#00c4c4"/>
<rect x="683.6" y="423.3" width="61.6" height="127.8" fill="none" stroke="#f0f0f0" stroke-width="1"/>
<text x="714.4" y="566" font-size="13.5" fill="#f4f4f4" text-anchor="middle">Cyan</text>
<rect x="756.0" y="423.3" width="61.6" height="127.8" fill="#c810cc"/>
<rect x="756.0" y="487.5" width="61.6" height="63.6" fill="#c400c4"/>
<rect x="756.0" y="423.3" width="61.6" height="127.8" fill="none" stroke="#f0f0f0" stroke-width="1"/>
<text x="786.8" y="566" font-size="13.5" fill="#f4f4f4" text-anchor="middle">Magenta</text>
<rect x="828.3" y="423.3" width="61.6" height="127.8" fill="#cccc00"/>
<rect x="828.3" y="487.5" width="61.6" height="63.6" fill="#c4c414"/>
<rect x="828.3" y="423.3" width="61.6" height="127.8" fill="none" stroke="#f0f0f0" stroke-width="1"/>
<text x="859.1" y="566" font-size="13.5" fill="#f4f4f4" text-anchor="middle">Yellow</text>
<rect x="900.6" y="423.3" width="61.6" height="127.8" fill="#fffefc"/>
<rect x="900.6" y="487.5" width="61.6" height="63.6" fill="#ffffff"/>
<rect x="900.6" y="423.3" width="61.6" height="127.8" fill="none" stroke="#f0f0f0" stroke-width="1"/>
<text x="931.4" y="566" font-size="13.5" fill="#f4f4f4" text-anchor="middle">100W</text>
<text transform="translate(390,451) rotate(-90)" font-size="12.5" fill="#f4f4f4" text-anchor="middle">Actual</text>
<text transform="translate(390,523) rotate(-90)" font-size="12.5" fill="#f4f4f4" text-anchor="middle">Target</text>
<rect x="975.3" y="47" width="700" height="540.8" fill="#1c1c1c"/>
<rect x="982.3" y="53.7" width="700" height="527.5" fill="#333"/>
<text x="1322" y="72" font-size="14.5" fill="#dcdcdc" text-anchor="middle" textLength="85" lengthAdjust="spacingAndGlyphs">CIE 1976 u'v'</text>
<rect x="1020" y="76.6" width="638.8" height="476.4" fill="#242424"/>
<g clip-path="url(#plt)"><g clip-path="url(#loc)"><g shape-rendering="crispEdges" filter="url(#vb)"><rect x="1020" y="78" width="639" height="14" fill="url(#r0)"/><rect x="1020" y="92" width="639" height="6" fill="url(#r1)"/><rect x="1020" y="98" width="639" height="4" fill="url(#r2)"/><rect x="1020" y="102" width="639" height="3" fill="url(#r3)"/><rect x="1020" y="105" width="639" height="3" fill="url(#r4)"/><rect x="1020" y="108" width="639" height="3" fill="url(#r5)"/><rect x="1020" y="111" width="639" height="2" fill="url(#r6)"/><rect x="1020" y="113" width="639" height="2" fill="url(#r7)"/><rect x="1020" y="115" width="639" height="2" fill="url(#r8)"/><rect x="1020" y="117" width="639" height="2" fill="url(#r9)"/><rect x="1020" y="119" width="639" height="2" fill="url(#r10)"/><rect x="1020" y="121" width="639" height="2" fill="url(#r11)"/><rect x="1020" y="123" width="639" height="2" fill="url(#r12)"/><rect x="1020" y="125" width="639" height="2" fill="url(#r13)"/><rect x="1020" y="127" width="639" height="2" fill="url(#r14)"/><rect x="1020" y="129" width="639" height="2" fill="url(#r15)"/><rect x="1020" y="131" width="639" height="2" fill="url(#r16)"/><rect x="1020" y="133" width="639" height="2" fill="url(#r17)"/><rect x="1020" y="135" width="639" height="2" fill="url(#r18)"/><rect x="1020" y="137" width="639" height="2" fill="url(#r19)"/><rect x="1020" y="139" width="639" height="2" fill="url(#r20)"/><rect x="1020" y="141" width="639" height="2" fill="url(#r21)"/><rect x="1020" y="143" width="639" height="2" fill="url(#r22)"/><rect x="1020" y="145" width="639" height="2" fill="url(#r23)"/><rect x="1020" y="147" width="639" height="2" fill="url(#r24)"/><rect x="1020" y="149" width="639" height="2" fill="url(#r25)"/><rect x="1020" y="151" width="639" height="2" fill="url(#r26)"/><rect x="1020" y="153" width="639" height="2" fill="url(#r27)"/><rect x="1020" y="155" width="639" height="2" fill="url(#r28)"/><rect x="1020" y="157" width="639" height="2" fill="url(#r29)"/><rect x="1020" y="159" width="639" height="2" fill="url(#r30)"/><rect x="1020" y="161" width="639" height="2" fill="url(#r31)"/><rect x="1020" y="163" width="639" height="2" fill="url(#r32)"/><rect x="1020" y="165" width="639" height="2" fill="url(#r33)"/><rect x="1020" y="167" width="639" height="2" fill="url(#r34)"/><rect x="1020" y="169" width="639" height="2" fill="url(#r35)"/><rect x="1020" y="171" width="639" height="2" fill="url(#r36)"/><rect x="1020" y="173" width="639" height="2" fill="url(#r37)"/><rect x="1020" y="175" width="639" height="2" fill="url(#r38)"/><rect x="1020" y="177" width="639" height="2" fill="url(#r39)"/><rect x="1020" y="179" width="639" height="2" fill="url(#r40)"/><rect x="1020" y="181" width="639" height="2" fill="url(#r41)"/><rect x="1020" y="183" width="639" height="2" fill="url(#r42)"/><rect x="1020" y="185" width="639" height="2" fill="url(#r43)"/><rect x="1020" y="187" width="639" height="2" fill="url(#r44)"/><rect x="1020" y="189" width="639" height="2" fill="url(#r45)"/><rect x="1020" y="191" width="639" height="2" fill="url(#r46)"/><rect x="1020" y="193" width="639" height="2" fill="url(#r47)"/><rect x="1020" y="195" width="639" height="2" fill="url(#r48)"/><rect x="1020" y="197" width="639" height="2" fill="url(#r49)"/><rect x="1020" y="199" width="639" height="2" fill="url(#r50)"/><rect x="1020" y="201" width="639" height="2" fill="url(#r51)"/><rect x="1020" y="203" width="639" height="2" fill="url(#r52)"/><rect x="1020" y="205" width="639" height="2" fill="url(#r53)"/><rect x="1020" y="207" width="639" height="2" fill="url(#r54)"/><rect x="1020" y="209" width="639" height="2" fill="url(#r55)"/><rect x="1020" y="211" width="639" height="2" fill="url(#r56)"/><rect x="1020" y="213" width="639" height="2" fill="url(#r57)"/><rect x="1020" y="215" width="639" height="2" fill="url(#r58)"/><rect x="1020" y="217" width="639" height="2" fill="url(#r59)"/><rect x="1020" y="219" width="639" height="2" fill="url(#r60)"/><rect x="1020" y="221" width="639" height="2" fill="url(#r61)"/><rect x="1020" y="223" width="639" height="2" fill="url(#r62)"/><rect x="1020" y="225" width="639" height="3" fill="url(#r63)"/><rect x="1020" y="228" width="639" height="3" fill="url(#r64)"/><rect x="1020" y="231" width="639" height="3" fill="url(#r65)"/><rect x="1020" y="234" width="639" height="3" fill="url(#r66)"/><rect x="1020" y="237" width="639" height="3" fill="url(#r67)"/><rect x="1020" y="240" width="639" height="3" fill="url(#r68)"/><rect x="1020" y="243" width="639" height="3" fill="url(#r69)"/><rect x="1020" y="246" width="639" height="3" fill="url(#r70)"/><rect x="1020" y="249" width="639" height="3" fill="url(#r71)"/><rect x="1020" y="252" width="639" height="3" fill="url(#r72)"/><rect x="1020" y="255" width="639" height="3" fill="url(#r73)"/><rect x="1020" y="258" width="639" height="3" fill="url(#r74)"/><rect x="1020" y="261" width="639" height="3" fill="url(#r75)"/><rect x="1020" y="264" width="639" height="3" fill="url(#r76)"/><rect x="1020" y="267" width="639" height="4" fill="url(#r77)"/><rect x="1020" y="271" width="639" height="4" fill="url(#r78)"/><rect x="1020" y="275" width="639" height="4" fill="url(#r79)"/><rect x="1020" y="279" width="639" height="4" fill="url(#r80)"/><rect x="1020" y="283" width="639" height="4" fill="url(#r81)"/><rect x="1020" y="287" width="639" height="4" fill="url(#r82)"/><rect x="1020" y="291" width="639" height="4" fill="url(#r83)"/><rect x="1020" y="295" width="639" height="4" fill="url(#r84)"/><rect x="1020" y="299" width="639" height="4" fill="url(#r85)"/><rect x="1020" y="303" width="639" height="4" fill="url(#r86)"/><rect x="1020" y="307" width="639" height="5" fill="url(#r87)"/><rect x="1020" y="312" width="639" height="5" fill="url(#r88)"/><rect x="1020" y="317" width="639" height="5" fill="url(#r89)"/><rect x="1020" y="322" width="639" height="5" fill="url(#r90)"/><rect x="1020" y="327" width="639" height="5" fill="url(#r91)"/><rect x="1020" y="332" width="639" height="5" fill="url(#r92)"/><rect x="1020" y="337" width="639" height="5" fill="url(#r93)"/><rect x="1020" y="342" width="639" height="5" fill="url(#r94)"/><rect x="1020" y="347" width="639" height="6" fill="url(#r95)"/><rect x="1020" y="353" width="639" height="6" fill="url(#r96)"/><rect x="1020" y="359" width="639" height="6" fill="url(#r97)"/><rect x="1020" y="365" width="639" height="6" fill="url(#r98)"/><rect x="1020" y="371" width="639" height="6" fill="url(#r99)"/><rect x="1020" y="377" width="639" height="6" fill="url(#r100)"/><rect x="1020" y="383" width="639" height="6" fill="url(#r101)"/><rect x="1020" y="389" width="639" height="6" fill="url(#r102)"/><rect x="1020" y="395" width="639" height="6" fill="url(#r103)"/><rect x="1020" y="401" width="639" height="6" fill="url(#r104)"/><rect x="1020" y="407" width="639" height="6" fill="url(#r105)"/><rect x="1020" y="413" width="639" height="6" fill="url(#r106)"/><rect x="1020" y="419" width="639" height="6" fill="url(#r107)"/><rect x="1020" y="425" width="639" height="6" fill="url(#r108)"/><rect x="1020" y="431" width="639" height="6" fill="url(#r109)"/><rect x="1020" y="437" width="639" height="6" fill="url(#r110)"/><rect x="1020" y="443" width="639" height="6" fill="url(#r111)"/><rect x="1020" y="449" width="639" height="6" fill="url(#r112)"/><rect x="1020" y="455" width="639" height="6" fill="url(#r113)"/><rect x="1020" y="461" width="639" height="6" fill="url(#r114)"/><rect x="1020" y="467" width="639" height="6" fill="url(#r115)"/><rect x="1020" y="473" width="639" height="6" fill="url(#r116)"/><rect x="1020" y="479" width="639" height="6" fill="url(#r117)"/><rect x="1020" y="485" width="639" height="6" fill="url(#r118)"/><rect x="1020" y="491" width="639" height="6" fill="url(#r119)"/><rect x="1020" y="497" width="639" height="6" fill="url(#r120)"/><rect x="1020" y="503" width="639" height="6" fill="url(#r121)"/><rect x="1020" y="509" width="639" height="6" fill="url(#r122)"/><rect x="1020" y="515" width="639" height="6" fill="url(#r123)"/><rect x="1020" y="521" width="639" height="6" fill="url(#r124)"/><rect x="1020" y="527" width="639" height="6" fill="url(#r125)"/><rect x="1020" y="533" width="639" height="6" fill="url(#r126)"/><rect x="1020" y="539" width="639" height="14" fill="url(#r127)"/></g>
<path d="M1286.8 537.8L1286.2 537.5L1285.6 537.0L1284.9 536.6L1284.3 536.1L1283.5 535.5L1282.7 534.9L1281.8 534.2L1280.9 533.5L1279.9 532.8L1278.8 531.9L1277.7 531.0L1276.5 530.1L1275.3 529.1L1274.0 528.0L1272.7 526.9L1271.3 525.7L1269.8 524.5L1268.2 523.2L1266.6 521.9L1264.9 520.5L1263.1 519.1L1261.1 517.5L1259.1 515.9L1257.0 514.2L1254.7 512.4L1252.4 510.5L1249.9 508.5L1247.4 506.5L1244.8 504.4L1242.1 502.2L1239.2 499.9L1236.3 497.5L1233.2 494.9L1230.0 492.2L1226.7 489.3L1223.2 486.2L1219.7 483.0L1216.0 479.6L1212.2 476.0L1208.3 472.2L1204.2 468.0L1199.8 463.3L1195.1 458.1L1190.1 452.4L1184.7 446.2L1179.1 439.4L1173.3 432.3L1167.4 424.6L1161.3 416.6L1155.0 408.1L1148.6 399.2L1142.0 389.8L1135.3 379.9L1128.6 369.7L1121.8 359.0L1114.9 348.1L1108.1 337.1L1101.3 325.8L1094.6 314.4L1088.0 303.0L1081.6 291.5L1075.5 280.0L1069.7 268.6L1064.3 257.3L1059.2 246.4L1054.4 235.6L1050.0 225.2L1045.8 215.1L1042.0 205.4L1038.5 196.1L1035.4 187.3L1032.6 179.0L1030.2 171.2L1028.1 163.8L1026.4 157.0L1024.9 150.6L1023.7 144.6L1022.7 139.1L1022.1 133.9L1021.6 129.2L1021.5 124.8L1021.5 120.7L1021.8 116.9L1022.3 113.4L1022.9 110.1L1023.8 107.1L1024.9 104.3L1026.2 101.7L1027.7 99.4L1029.3 97.3L1031.1 95.5L1033.1 93.9L1035.1 92.4L1037.4 91.2L1039.7 90.2L1042.1 89.3L1044.6 88.5L1047.2 87.9L1049.9 87.5L1052.6 87.1L1055.4 86.8L1058.3 86.6L1061.2 86.4L1064.2 86.3L1067.2 86.2L1070.2 86.1L1073.3 86.1L1076.3 86.1L1079.3 86.1L1082.3 86.1L1085.4 86.2L1088.4 86.3L1091.5 86.4L1094.7 86.5L1097.8 86.6L1101.0 86.8L1104.3 87.0L1107.6 87.2L1111.0 87.4L1114.4 87.6L1117.8 87.9L1121.4 88.2L1124.9 88.5L1128.6 88.8L1132.3 89.1L1136.1 89.4L1139.9 89.8L1143.8 90.2L1147.8 90.6L1151.9 91.0L1156.1 91.4L1160.3 91.8L1164.7 92.2L1169.1 92.7L1173.6 93.2L1178.2 93.7L1182.9 94.2L1187.7 94.7L1192.6 95.2L1197.6 95.7L1202.7 96.3L1207.9 96.9L1213.2 97.4L1218.6 98.0L1224.2 98.6L1229.8 99.3L1235.5 99.9L1241.4 100.5L1247.4 101.2L1253.4 101.9L1259.6 102.6L1265.9 103.3L1272.4 104.0L1278.9 104.7L1285.5 105.5L1292.3 106.2L1299.1 107.0L1306.1 107.8L1313.1 108.6L1320.3 109.4L1327.5 110.2L1334.9 111.0L1342.3 111.8L1349.8 112.6L1357.4 113.5L1365.0 114.3L1372.7 115.2L1380.5 116.1L1388.3 116.9L1396.1 117.8L1403.9 118.7L1411.6 119.5L1419.3 120.4L1426.9 121.2L1434.4 122.1L1441.9 122.9L1449.3 123.8L1456.8 124.6L1464.2 125.4L1471.6 126.2L1478.9 127.0L1486.0 127.8L1493.0 128.6L1499.7 129.4L1506.3 130.1L1512.8 130.8L1519.2 131.5L1525.3 132.2L1531.4 132.9L1537.2 133.5L1543.0 134.2L1548.5 134.8L1553.8 135.4L1559.0 136.0L1564.0 136.5L1568.8 137.1L1573.5 137.6L1578.0 138.1L1582.3 138.6L1586.5 139.0L1590.6 139.5L1594.5 139.9L1598.2 140.3L1601.9 140.7L1605.4 141.1L1608.8 141.5L1612.1 141.9L1615.3 142.2L1618.5 142.6L1621.6 142.9L1624.5 143.3L1627.4 143.6L1630.2 143.9L1632.9 144.2L1635.4 144.5L1637.9 144.8L1640.3 145.0L1642.6 145.3L1644.9 145.5L1647.0 145.8L1649.0 146.0L1650.9 146.2L1652.7 146.4L1654.4 146.6L1656.0 146.8L1657.5 147.0L1658.9 147.1L1660.3 147.3L1661.6 147.4L1662.9 147.6L1664.0 147.7L1665.2 147.8L1666.2 147.9L1667.2 148.0L1668.2 148.2L1669.1 148.3L1669.9 148.3L1670.6 148.4L1671.3 148.5L1671.9 148.6L1672.5 148.6L1673.0 148.7L1673.6 148.8L1674.1 148.8L1674.6 148.9L1675.1 148.9L1675.6 149.0L1676.0 149.0L1676.4 149.1L1676.8 149.1L1677.2 149.2L1677.6 149.2L1678.0 149.3L1678.4 149.3L1678.8 149.3L1679.2 149.4L1679.6 149.4L1680.0 149.5L1680.4 149.5L1680.7 149.6L1681.1 149.6L1681.4 149.6L1681.7 149.7L1681.9 149.7L1682.1 149.7L1682.3 149.7L1682.4 149.7L1682.5 149.8L1682.7 149.8L1682.8 149.8L1682.9 149.8L1683.0 149.8L1683.1 149.8L1683.1 149.8L1683.2 149.8L1683.3 149.8L1683.3 149.8L1683.3 157.3L1296.1 536.9 Q1292.1 540.7 1286.8 537.8Z M1499.0 137.5L1152.5 106.1L1206.2 427.5Z" fill-rule="evenodd" fill="#000" fill-opacity=".4"/></g></g>
<rect x="1020" y="76.6" width="638.8" height="476.4" fill="none" stroke="#a0a0a0" stroke-width="1.5"/>
<line x1="1013.5" y1="553.0" x2="1020" y2="553.0" stroke="#ddd" stroke-width="1.5"/>
<text x="1013" y="559.5" font-size="14.5" fill="#dcdcdc" text-anchor="end">0</text>
<line x1="1020.0" y1="553" x2="1020.0" y2="559" stroke="#ddd" stroke-width="1.5"/>
<text x="1019.5" y="574.4" font-size="14.5" fill="#dcdcdc" text-anchor="middle">0</text>
<line x1="1013.5" y1="513.4" x2="1020" y2="513.4" stroke="#ddd" stroke-width="1.5"/>
<text x="1013" y="519.9" font-size="14.5" fill="#dcdcdc" text-anchor="end">0,05</text>
<line x1="1073.2" y1="553" x2="1073.2" y2="559" stroke="#ddd" stroke-width="1.5"/>
<text x="1072.7" y="574.4" font-size="14.5" fill="#dcdcdc" text-anchor="middle">0,05</text>
<line x1="1013.5" y1="473.8" x2="1020" y2="473.8" stroke="#ddd" stroke-width="1.5"/>
<text x="1013" y="480.3" font-size="14.5" fill="#dcdcdc" text-anchor="end">0,1</text>
<line x1="1126.4" y1="553" x2="1126.4" y2="559" stroke="#ddd" stroke-width="1.5"/>
<text x="1125.9" y="574.4" font-size="14.5" fill="#dcdcdc" text-anchor="middle">0,1</text>
<line x1="1013.5" y1="434.2" x2="1020" y2="434.2" stroke="#ddd" stroke-width="1.5"/>
<text x="1013" y="440.7" font-size="14.5" fill="#dcdcdc" text-anchor="end">0,15</text>
<line x1="1179.6" y1="553" x2="1179.6" y2="559" stroke="#ddd" stroke-width="1.5"/>
<text x="1179.1" y="574.4" font-size="14.5" fill="#dcdcdc" text-anchor="middle">0,15</text>
<line x1="1013.5" y1="394.6" x2="1020" y2="394.6" stroke="#ddd" stroke-width="1.5"/>
<text x="1013" y="401.1" font-size="14.5" fill="#dcdcdc" text-anchor="end">0,2</text>
<line x1="1232.8" y1="553" x2="1232.8" y2="559" stroke="#ddd" stroke-width="1.5"/>
<text x="1232.3" y="574.4" font-size="14.5" fill="#dcdcdc" text-anchor="middle">0,2</text>
<line x1="1013.5" y1="355.0" x2="1020" y2="355.0" stroke="#ddd" stroke-width="1.5"/>
<text x="1013" y="361.5" font-size="14.5" fill="#dcdcdc" text-anchor="end">0,25</text>
<line x1="1286.0" y1="553" x2="1286.0" y2="559" stroke="#ddd" stroke-width="1.5"/>
<text x="1285.5" y="574.4" font-size="14.5" fill="#dcdcdc" text-anchor="middle">0,25</text>
<line x1="1013.5" y1="315.4" x2="1020" y2="315.4" stroke="#ddd" stroke-width="1.5"/>
<text x="1013" y="321.9" font-size="14.5" fill="#dcdcdc" text-anchor="end">0,3</text>
<line x1="1339.2" y1="553" x2="1339.2" y2="559" stroke="#ddd" stroke-width="1.5"/>
<text x="1338.7" y="574.4" font-size="14.5" fill="#dcdcdc" text-anchor="middle">0,3</text>
<line x1="1013.5" y1="275.8" x2="1020" y2="275.8" stroke="#ddd" stroke-width="1.5"/>
<text x="1013" y="282.3" font-size="14.5" fill="#dcdcdc" text-anchor="end">0,35</text>
<line x1="1392.4" y1="553" x2="1392.4" y2="559" stroke="#ddd" stroke-width="1.5"/>
<text x="1391.9" y="574.4" font-size="14.5" fill="#dcdcdc" text-anchor="middle">0,35</text>
<line x1="1013.5" y1="236.2" x2="1020" y2="236.2" stroke="#ddd" stroke-width="1.5"/>
<text x="1013" y="242.7" font-size="14.5" fill="#dcdcdc" text-anchor="end">0,4</text>
<line x1="1445.6" y1="553" x2="1445.6" y2="559" stroke="#ddd" stroke-width="1.5"/>
<text x="1445.1" y="574.4" font-size="14.5" fill="#dcdcdc" text-anchor="middle">0,4</text>
<line x1="1013.5" y1="196.6" x2="1020" y2="196.6" stroke="#ddd" stroke-width="1.5"/>
<text x="1013" y="203.1" font-size="14.5" fill="#dcdcdc" text-anchor="end">0,45</text>
<line x1="1498.8" y1="553" x2="1498.8" y2="559" stroke="#ddd" stroke-width="1.5"/>
<text x="1498.3" y="574.4" font-size="14.5" fill="#dcdcdc" text-anchor="middle">0,45</text>
<line x1="1013.5" y1="157.0" x2="1020" y2="157.0" stroke="#ddd" stroke-width="1.5"/>
<text x="1013" y="163.5" font-size="14.5" fill="#dcdcdc" text-anchor="end">0,5</text>
<line x1="1552.0" y1="553" x2="1552.0" y2="559" stroke="#ddd" stroke-width="1.5"/>
<text x="1551.5" y="574.4" font-size="14.5" fill="#dcdcdc" text-anchor="middle">0,5</text>
<line x1="1013.5" y1="117.4" x2="1020" y2="117.4" stroke="#ddd" stroke-width="1.5"/>
<text x="1013" y="123.9" font-size="14.5" fill="#dcdcdc" text-anchor="end">0,55</text>
<line x1="1605.2" y1="553" x2="1605.2" y2="559" stroke="#ddd" stroke-width="1.5"/>
<text x="1604.7" y="574.4" font-size="14.5" fill="#dcdcdc" text-anchor="middle">0,55</text>
<rect x="1492.5" y="131.0" width="13" height="13" fill="none" stroke="#f4f4f4" stroke-width="1.5"/>
<rect x="1146.0" y="99.6" width="13" height="13" fill="none" stroke="#f4f4f4" stroke-width="1.5"/>
<rect x="1199.7" y="421.0" width="13" height="13" fill="none" stroke="#f4f4f4" stroke-width="1.5"/>
<rect x="1160.2" y="184.6" width="13" height="13" fill="none" stroke="#f4f4f4" stroke-width="1.5"/>
<rect x="1337.5" y="284.4" width="13" height="13" fill="none" stroke="#f4f4f4" stroke-width="1.5"/>
<rect x="1230.0" y="107.2" width="13" height="13" fill="none" stroke="#f4f4f4" stroke-width="1.5"/>
<circle cx="1496.7" cy="134.7" r="4.2" fill="#b00000" stroke="#000" stroke-width="1"/>
<circle cx="1156.7" cy="105.6" r="4.2" fill="#10b810" stroke="#000" stroke-width="1"/>
<circle cx="1198.5" cy="418.2" r="4.2" fill="#000098" stroke="#000050" stroke-width="1"/>
<circle cx="1168.3" cy="190.4" r="4.2" fill="#00a8a8" stroke="#000" stroke-width="1"/>
<circle cx="1341.5" cy="290.1" r="4.2" fill="#a000a0" stroke="#000" stroke-width="1"/>
<circle cx="1237.4" cy="113.3" r="4.2" fill="#c4c414" stroke="#000" stroke-width="1"/>
<rect x="1223.5" y="174.4" width="13" height="13" fill="none" stroke="#000" stroke-width="2"/>
<circle cx="1230.4" cy="180.7" r="4.3" fill="#ccc" stroke="#000" stroke-width="1.2"/>
<circle cx="1231.0" cy="179.7" r="4.3" fill="#fff" stroke="#000" stroke-width="1.2"/>
<rect x="1404.3" y="521.8" width="251.7" height="26.2" fill="#303030"/>
<text x="1405.5" y="541.7" font-size="19" fill="#f4f4f4" textLength="221" lengthAdjust="spacingAndGlyphs" xml:space="preserve">Gamut Coverage:  97,1%</text>
<text x="16" y="650.4" font-size="28.5" fill="#f4f4f4" textLength="219" lengthAdjust="spacingAndGlyphs">Current Reading</text>
<text x="16" y="718.3" font-size="23" fill="#f4f4f4" textLength="102.5" lengthAdjust="spacingAndGlyphs">x: 0,3151</text>
<text x="173" y="718.3" font-size="23" fill="#f4f4f4" textLength="88.5" lengthAdjust="spacingAndGlyphs">y: 0,331</text>
<text x="16" y="758.2" font-size="23" fill="#f4f4f4" textLength="97" lengthAdjust="spacingAndGlyphs">fL: 78,19</text>
<text x="16" y="797.8" font-size="23" fill="#f4f4f4" textLength="159.5" lengthAdjust="spacingAndGlyphs">cd/m²: 267,91</text>
<text x="468.5" y="620" font-size="14.5" fill="#dcdcdc" text-anchor="middle" textLength="83" lengthAdjust="spacingAndGlyphs">RGB Balance</text>
<rect x="347.6" y="625.8" width="260.6" height="174.0" fill="#242424"/>
<line x1="347.6" y1="669.3" x2="608.2" y2="669.3" stroke="#8e8e8e" stroke-width="1.5"/>
<line x1="347.6" y1="712.5" x2="608.2" y2="712.5" stroke="#8e8e8e" stroke-width="1.5"/>
<line x1="347.6" y1="756.3" x2="608.2" y2="756.3" stroke="#8e8e8e" stroke-width="1.5"/>
<rect x="347.6" y="625.8" width="260.6" height="174.0" fill="none" stroke="#a0a0a0" stroke-width="1.5"/>
<line x1="341.6" y1="625.8" x2="347.6" y2="625.8" stroke="#ddd" stroke-width="1.5"/>
<text x="341.1" y="631.1999999999999" font-size="14.5" fill="#dcdcdc" text-anchor="end">4</text>
<line x1="341.6" y1="669.3" x2="347.6" y2="669.3" stroke="#ddd" stroke-width="1.5"/>
<text x="341.1" y="674.6999999999999" font-size="14.5" fill="#dcdcdc" text-anchor="end">2</text>
<line x1="341.6" y1="712.5" x2="347.6" y2="712.5" stroke="#ddd" stroke-width="1.5"/>
<text x="341.1" y="717.9" font-size="14.5" fill="#dcdcdc" text-anchor="end">0</text>
<line x1="341.6" y1="756.3" x2="347.6" y2="756.3" stroke="#ddd" stroke-width="1.5"/>
<text x="341.1" y="761.6999999999999" font-size="14.5" fill="#dcdcdc" text-anchor="end">-2</text>
<line x1="341.6" y1="799.8" x2="347.6" y2="799.8" stroke="#ddd" stroke-width="1.5"/>
<text x="341.1" y="805.1999999999999" font-size="14.5" fill="#dcdcdc" text-anchor="end">-4</text>
<line x1="347.6" y1="799.8" x2="347.6" y2="803.8" stroke="#a0a0a0" stroke-width="1.5"/>
<line x1="608.2" y1="799.8" x2="608.2" y2="803.8" stroke="#a0a0a0" stroke-width="1.5"/>
<text x="477.3" y="815.5" font-size="14.5" fill="#dcdcdc" text-anchor="middle" textLength="39" lengthAdjust="spacingAndGlyphs">100W</text>
<rect x="372.8" y="677.6" width="68.6" height="34.9" fill="url(#rbr)" stroke="#000" stroke-width="1.3"/>
<rect x="442.6" y="712.5" width="68" height="5.6" fill="url(#rbg)" stroke="#000" stroke-width="1.2"/>
<rect x="511" y="712.5" width="68.8" height="54.3" fill="url(#rbb)" stroke="#000" stroke-width="1.3"/>
<text x="808.7" y="612.3" font-size="14.5" fill="#dcdcdc" text-anchor="middle" textLength="76" lengthAdjust="spacingAndGlyphs">CIE 1931 xy</text>
<foreignObject x="638" y="616" width="342" height="193"><div style="width:342px;height:193px;background:radial-gradient(circle at 50% 50%,rgba(255,255,255,1) 0,rgba(255,255,255,.78) 96px,rgba(255,255,255,.63) 171px,rgba(255,255,255,.55) 196px),conic-gradient(from 0deg at 50% 50%,rgb(5,255,0) 0deg,rgb(255,255,73) 45deg,rgb(255,189,67) 61deg,rgb(255,80,70) 90deg,rgb(255,22,111) 119deg,rgb(255,27,255) 180deg,rgb(67,133,255) 241deg,rgb(13,255,255) 270deg,rgb(0,255,133) 299deg,rgb(0,255,0) 356deg,rgb(5,255,0) 360deg)"></div></foreignObject>
<rect x="638" y="616" width="342" height="193" fill="none" stroke="#a8a8a8" stroke-width="1.2"/>
<rect x="801.2" y="705.2" width="14" height="13" fill="none" stroke="#000" stroke-width="2"/>
<circle cx="813" cy="711.5" r="4.3" fill="#c4c4c4" stroke="#000" stroke-width="1.2"/>
<circle cx="823.8" cy="703.6" r="4.3" fill="#fff" stroke="#000" stroke-width="1.2"/>
<g clip-path="url(#tbl)">
<rect x="997.3" y="603.2" width="633.5" height="37.6" fill="url(#thd)"/>
<rect x="997.2" y="603.2" width="14.8" height="37.6" fill="#000"/>
<text x="1088.3" y="629.3" font-size="22.6" fill="#f4f4f4" textLength="42.1" lengthAdjust="spacingAndGlyphs">White</text>
<text x="1167.3" y="629.3" font-size="22.6" fill="#f4f4f4" textLength="26.5" lengthAdjust="spacingAndGlyphs">Red</text>
<text x="1237.3" y="629.3" font-size="22.6" fill="#f4f4f4" textLength="42.5" lengthAdjust="spacingAndGlyphs">Green</text>
<text x="1316.6" y="629.3" font-size="22.6" fill="#f4f4f4" textLength="30.8" lengthAdjust="spacingAndGlyphs">Blue</text>
<text x="1386.2" y="629.3" font-size="22.6" fill="#f4f4f4" textLength="34" lengthAdjust="spacingAndGlyphs">Cyan</text>
<text x="1465.9" y="629.3" font-size="22.6" fill="#f4f4f4" textLength="61.5" lengthAdjust="spacingAndGlyphs">Magenta</text>
<text x="1536.7" y="629.3" font-size="22.6" fill="#f4f4f4" textLength="45" lengthAdjust="spacingAndGlyphs">Yellow</text>
<text transform="translate(1616,629.3) scale(0.73,1)" font-size="22.6" fill="#f4f4f4">100W</text>
<rect x="1012.3" y="640.8" width="618.5" height="34.65" fill="#464646"/>
<rect x="997.3" y="640.8" width="15" height="34.65" fill="url(#trh)"/>
<text x="1016.3" y="666.2" font-size="22.6" fill="#f4f4f4" textLength="58" lengthAdjust="spacingAndGlyphs">x: CIE31</text>
<text transform="translate(1088.3,666.2) scale(0.73,1)" font-size="22.6" fill="#f4f4f4">0,3134</text>
<text transform="translate(1167.3,666.2) scale(0.73,1)" font-size="22.6" fill="#f4f4f4">0,6439</text>
<text transform="translate(1237.3,666.2) scale(0.73,1)" font-size="22.6" fill="#f4f4f4">0,3082</text>
<text transform="translate(1316.6,666.2) scale(0.73,1)" font-size="22.6" fill="#f4f4f4">0,1471</text>
<text transform="translate(1386.2,666.2) scale(0.73,1)" font-size="22.6" fill="#f4f4f4">0,2273</text>
<text transform="translate(1465.9,666.2) scale(0.73,1)" font-size="22.6" fill="#f4f4f4">0,3196</text>
<text transform="translate(1536.7,666.2) scale(0.73,1)" font-size="22.6" fill="#f4f4f4">0,4214</text>
<text transform="translate(1616,666.2) scale(0.73,1)" font-size="22.6" fill="#f4f4f4">0,3</text>
<rect x="1012.3" y="675.4" width="618.5" height="34.65" fill="#7d7d7d"/>
<rect x="997.3" y="675.4" width="15" height="34.65" fill="url(#trh)"/>
<text x="1016.3" y="700.8" font-size="22.6" fill="#f4f4f4" textLength="58.5" lengthAdjust="spacingAndGlyphs">y: CIE31</text>
<text transform="translate(1088.3,700.8) scale(0.73,1)" font-size="22.6" fill="#f4f4f4">0,3292</text>
<text transform="translate(1167.3,700.8) scale(0.73,1)" font-size="22.6" fill="#f4f4f4">0,3359</text>
<text transform="translate(1237.3,700.8) scale(0.73,1)" font-size="22.6" fill="#f4f4f4">0,5981</text>
<text transform="translate(1316.6,700.8) scale(0.73,1)" font-size="22.6" fill="#f4f4f4">0,0659</text>
<text transform="translate(1386.2,700.8) scale(0.73,1)" font-size="22.6" fill="#f4f4f4">0,3297</text>
<text transform="translate(1465.9,700.8) scale(0.73,1)" font-size="22.6" fill="#f4f4f4">0,1553</text>
<text transform="translate(1536.7,700.8) scale(0.73,1)" font-size="22.6" fill="#f4f4f4">0,5061</text>
<text transform="translate(1616,700.8) scale(0.73,1)" font-size="22.6" fill="#f4f4f4">0,3</text>
<rect x="1012.3" y="710.1" width="618.5" height="34.65" fill="#464646"/>
<rect x="997.3" y="710.1" width="15" height="34.65" fill="url(#trh)"/>
<text x="1016.3" y="735.5" font-size="22.6" fill="#f4f4f4" textLength="9.5" lengthAdjust="spacingAndGlyphs">Y</text>
<text transform="translate(1088.3,735.5) scale(0.73,1)" font-size="22.6" fill="#f4f4f4">148,1236</text>
<text transform="translate(1167.3,735.5) scale(0.73,1)" font-size="22.6" fill="#f4f4f4">35,9523</text>
<text transform="translate(1237.3,735.5) scale(0.73,1)" font-size="22.6" fill="#f4f4f4">116,5745</text>
<text transform="translate(1316.6,735.5) scale(0.73,1)" font-size="22.6" fill="#f4f4f4">12,4665</text>
<text transform="translate(1386.2,735.5) scale(0.73,1)" font-size="22.6" fill="#f4f4f4">123,6473</text>
<text transform="translate(1465.9,735.5) scale(0.73,1)" font-size="22.6" fill="#f4f4f4">45,8051</text>
<text transform="translate(1536.7,735.5) scale(0.73,1)" font-size="22.6" fill="#f4f4f4">146,7649</text>
<text transform="translate(1616,735.5) scale(0.73,1)" font-size="22.6" fill="#f4f4f4">267</text>
<rect x="1012.3" y="744.8" width="618.5" height="34.65" fill="#7d7d7d"/>
<rect x="997.3" y="744.8" width="15" height="34.65" fill="url(#trh)"/>
<text x="1016.3" y="770.1" font-size="22.6" fill="#f4f4f4" textLength="60.7" lengthAdjust="spacingAndGlyphs">Target Y</text>
<text transform="translate(1088.3,770.1) scale(0.73,1)" font-size="22.6" fill="#f4f4f4">148,1236</text>
<text transform="translate(1167.3,770.1) scale(0.73,1)" font-size="22.6" fill="#f4f4f4">31,4994</text>
<text transform="translate(1237.3,770.1) scale(0.73,1)" font-size="22.6" fill="#f4f4f4">105,9318</text>
<text transform="translate(1316.6,770.1) scale(0.73,1)" font-size="22.6" fill="#f4f4f4">10,6924</text>
<text transform="translate(1386.2,770.1) scale(0.73,1)" font-size="22.6" fill="#f4f4f4">116,6242</text>
<text transform="translate(1465.9,770.1) scale(0.73,1)" font-size="22.6" fill="#f4f4f4">42,1918</text>
<text transform="translate(1536.7,770.1) scale(0.73,1)" font-size="22.6" fill="#f4f4f4">137,4312</text>
<text transform="translate(1616,770.1) scale(0.73,1)" font-size="22.6" fill="#f4f4f4">267</text>
<rect x="1012.3" y="779.4" width="618.5" height="34.65" fill="#464646"/>
<rect x="997.3" y="779.4" width="15" height="34.65" fill="url(#trh)"/>
<text x="1016.3" y="804.8" font-size="22.6" fill="#f4f4f4" textLength="61" lengthAdjust="spacingAndGlyphs">ΔE 2000</text>
<text transform="translate(1088.3,804.8) scale(0.73,1)" font-size="22.6" fill="#f4f4f4">0,3857</text>
<text transform="translate(1167.3,804.8) scale(0.73,1)" font-size="22.6" fill="#f4f4f4">3,6951</text>
<text transform="translate(1237.3,804.8) scale(0.73,1)" font-size="22.6" fill="#f4f4f4">2,4273</text>
<text transform="translate(1316.6,804.8) scale(0.73,1)" font-size="22.6" fill="#f4f4f4">2,6039</text>
<text transform="translate(1386.2,804.8) scale(0.73,1)" font-size="22.6" fill="#f4f4f4">1,3161</text>
<text transform="translate(1465.9,804.8) scale(0.73,1)" font-size="22.6" fill="#f4f4f4">1,7335</text>
<text transform="translate(1536.7,804.8) scale(0.73,1)" font-size="22.6" fill="#f4f4f4">1,6138</text>
<text transform="translate(1616,804.8) scale(0.73,1)" font-size="22.6" fill="#f4f4f4">1,2</text>
</g>
<rect x="1631" y="641.4" width="17" height="152" fill="url(#sbv)" rx="3"/>
<rect x="1633" y="664.8" width="13" height="82.5" fill="#3c3c3c" rx="6"/>
<rect x="1632.5" y="643.5" width="14" height="17.5" rx="3" fill="#6c6c6c"/><path d="M1634.5 656 l5 -8 l5 8z" fill="#2e2e2e"/>
<rect x="1632.5" y="774" width="14" height="17.5" rx="3" fill="#6c6c6c"/><path d="M1634.5 779 l5 8 l5 -8z" fill="#2e2e2e"/>
<rect x="1012.5" y="794.2" width="618" height="22" fill="url(#sbh)" rx="3"/>
<rect x="1031" y="797.3" width="529.5" height="16" fill="#3e3e3e" rx="8"/>
<rect x="1014" y="797" width="15" height="16.5" rx="3" fill="#6c6c6c"/><path d="M1026 800 l-8 5 l8 5z" fill="#2e2e2e"/>
<rect x="1615" y="797" width="14.5" height="16.5" rx="3" fill="#6c6c6c"/><path d="M1618.5 800 l8 5 l-8 5z" fill="#2e2e2e"/>
<rect x="0" y="900.8" width="1663" height="2.2" fill="#262626"/>
<rect x="241" y="900.8" width="1422" height="2.2" fill="#0e1c28"/>
<rect x="2.5" y="824.7" width="155.5" height="76.2" fill="url(#gtb)" rx="4.5"/>
<rect x="7.8" y="829.5" width="145" height="47.8" rx="4" fill="#000" fill-opacity=".18"/>
<rect x="9.3" y="831" width="142" height="45" fill="#c0c0c0" rx="3.5"/>
<text x="80.2" y="894.8" font-size="13.5" fill="#2a2a2a" text-anchor="middle" font-weight="bold">White</text>
<rect x="160.5" y="824.7" width="155.5" height="76.2" fill="url(#gtb)" rx="4.5"/>
<rect x="165.8" y="829.5" width="145" height="47.8" rx="4" fill="#000" fill-opacity=".18"/>
<rect x="167.3" y="831" width="142" height="45" fill="#c00000" rx="3.5"/>
<text x="238.2" y="894.8" font-size="13.5" fill="#2a2a2a" text-anchor="middle" font-weight="bold">Red</text>
<rect x="318.5" y="824.7" width="155.5" height="76.2" fill="url(#gtb)" rx="4.5"/>
<rect x="323.8" y="829.5" width="145" height="47.8" rx="4" fill="#000" fill-opacity=".18"/>
<rect x="325.3" y="831" width="142" height="45" fill="#00c000" rx="3.5"/>
<text x="396.2" y="894.8" font-size="13.5" fill="#2a2a2a" text-anchor="middle" font-weight="bold">Green</text>
<rect x="476.5" y="824.7" width="155.5" height="76.2" fill="url(#gtb)" rx="4.5"/>
<rect x="481.8" y="829.5" width="145" height="47.8" rx="4" fill="#000" fill-opacity=".18"/>
<rect x="483.3" y="831" width="142" height="45" fill="#0000c0" rx="3.5"/>
<text x="554.2" y="894.8" font-size="13.5" fill="#2a2a2a" text-anchor="middle" font-weight="bold">Blue</text>
<rect x="634.5" y="824.7" width="155.5" height="76.2" fill="url(#gtb)" rx="4.5"/>
<rect x="639.8" y="829.5" width="145" height="47.8" rx="4" fill="#000" fill-opacity=".18"/>
<rect x="641.3" y="831" width="142" height="45" fill="#00c0c0" rx="3.5"/>
<text x="712.2" y="894.8" font-size="13.5" fill="#2a2a2a" text-anchor="middle" font-weight="bold">Cyan</text>
<rect x="792.5" y="824.7" width="155.5" height="76.2" fill="url(#gtb)" rx="4.5"/>
<rect x="797.8" y="829.5" width="145" height="47.8" rx="4" fill="#000" fill-opacity=".18"/>
<rect x="799.3" y="831" width="142" height="45" fill="#c000c0" rx="3.5"/>
<text x="870.2" y="894.8" font-size="13.5" fill="#2a2a2a" text-anchor="middle" font-weight="bold">Magenta</text>
<rect x="950.5" y="824.7" width="155.5" height="76.2" fill="url(#gtb)" rx="4.5"/>
<rect x="955.8" y="829.5" width="145" height="47.8" rx="4" fill="#000" fill-opacity=".18"/>
<rect x="957.3" y="831" width="142" height="45" fill="#c0c000" rx="3.5"/>
<text x="1028.2" y="894.8" font-size="13.5" fill="#2a2a2a" text-anchor="middle" font-weight="bold">Yellow</text>
<rect x="1108.5" y="824.7" width="155.5" height="76.2" fill="url(#gsel)" rx="4.5"/>
<rect x="1115.3" y="831" width="142" height="45" fill="#ffffff" rx="3.5"/>
<text x="1186.2" y="894.8" font-size="13.5" fill="#fff" text-anchor="middle" font-weight="bold">100W</text>
<rect x="1267.7" y="824.7" width="59.5" height="22" fill="url(#gtb2)" rx="4"/>
<rect x="1267.7" y="847.8" width="59.5" height="53" fill="url(#gtb3)" rx="4"/>
<circle cx="1297.3" cy="835" r="8.5" fill="url(#gic)"/><path d="M1291.8 838 l5.5 -6 l5.5 6z" fill="#333"/>
<rect x="1279.5" y="856.5" width="35.5" height="35.5" rx="5" fill="#8c8c8c" stroke="#1c1c1c" stroke-width="2.6"/>
<rect x="1288.5" y="866" width="17.5" height="17.5" fill="#000"/>
<rect x="1328.2" y="823.8" width="57.6" height="37.8" fill="url(#gtb2)"/>
<circle cx="1356.8" cy="843.3" r="12.3" fill="url(#gic)"/>
<rect x="1387" y="823.8" width="55.1" height="37.8" fill="url(#gtb2)"/>
<circle cx="1413.7" cy="843.3" r="12.3" fill="url(#gic)"/>
<rect x="1443.3" y="823.8" width="55.4" height="37.8" fill="url(#gtb2)"/>
<circle cx="1470.6" cy="843.3" r="12.3" fill="url(#gic)"/>
<rect x="1500" y="823.8" width="54.8" height="37.8" fill="url(#gtb2)"/>
<circle cx="1527.8" cy="843.3" r="12.3" fill="url(#gic)"/>
<rect x="1556" y="823.8" width="55" height="37.8" fill="url(#gtb2)"/>
<circle cx="1583.6" cy="843.3" r="12.3" fill="url(#gic)"/>
<rect x="1352.3" y="838.4" width="9.6" height="9.4" fill="#333"/>
<path d="M1411 838.2 v11.6 l10.8 -5.8z" fill="#333"/>
<path d="M1467.6 838.6 h-3.2 v10.6 h3.2 M1474.2 838.6 h3.2 v10.6 h-3.2" fill="none" stroke="#333" stroke-width="2"/>
<text x="1470.9" y="847" font-size="9" fill="#333" text-anchor="middle" font-weight="bold">↔</text>
<text x="1527.8" y="849.3" font-size="18" fill="#333" text-anchor="middle" font-weight="bold">∞</text>
<g fill="none" stroke="#333" stroke-width="2.4"><path d="M1577.5 840.5 a6.3 6.3 0 0 1 11 -2.5"/><path d="M1589.7 844.5 a6.3 6.3 0 0 1 -11 2.5"/></g><path d="M1590.5 834 v6.5 h-6.5z M1576.7 851 v-6.5 h6.5z" fill="#333"/>
<rect x="1328.2" y="863.4" width="170.1" height="37.4" fill="url(#gtb2)"/>
<rect x="1500" y="863.4" width="165" height="37.4" fill="url(#gtb2)"/>
<circle cx="1366.7" cy="881.7" r="12" fill="url(#gic)"/><circle cx="1633.7" cy="881.7" r="12" fill="url(#gic)"/>
<g fill="none" stroke="#383838" stroke-width="1.8"><path d="M1366.2 877.2 l-4.4 4.6 l4.4 4.6 M1371.6 877.2 l-4.4 4.6 l4.4 4.6"/><path d="M1629 877.2 l4.4 4.6 l-4.4 4.6 M1634.4 877.2 l4.4 4.6 l-4.4 4.6"/></g>
<text x="1401" y="891.5" font-size="26" fill="#333" textLength="62.5" lengthAdjust="spacingAndGlyphs" stroke="#333" stroke-width=".9">Back</text>
<text x="1534.3" y="891.5" font-size="26" fill="#333" textLength="63.5" lengthAdjust="spacingAndGlyphs" stroke="#333" stroke-width=".9">Next</text>
<g stroke="#e60a0a" stroke-width="7.6" stroke-linecap="round">
<line x1="1638.3" y1="854.4" x2="1638.3" y2="828.0"/>
<line x1="1626.9" y1="847.8" x2="1649.7" y2="834.6"/>
<line x1="1626.9" y1="834.6" x2="1649.7" y2="847.8"/>
</g>
</svg>
</body></html>
